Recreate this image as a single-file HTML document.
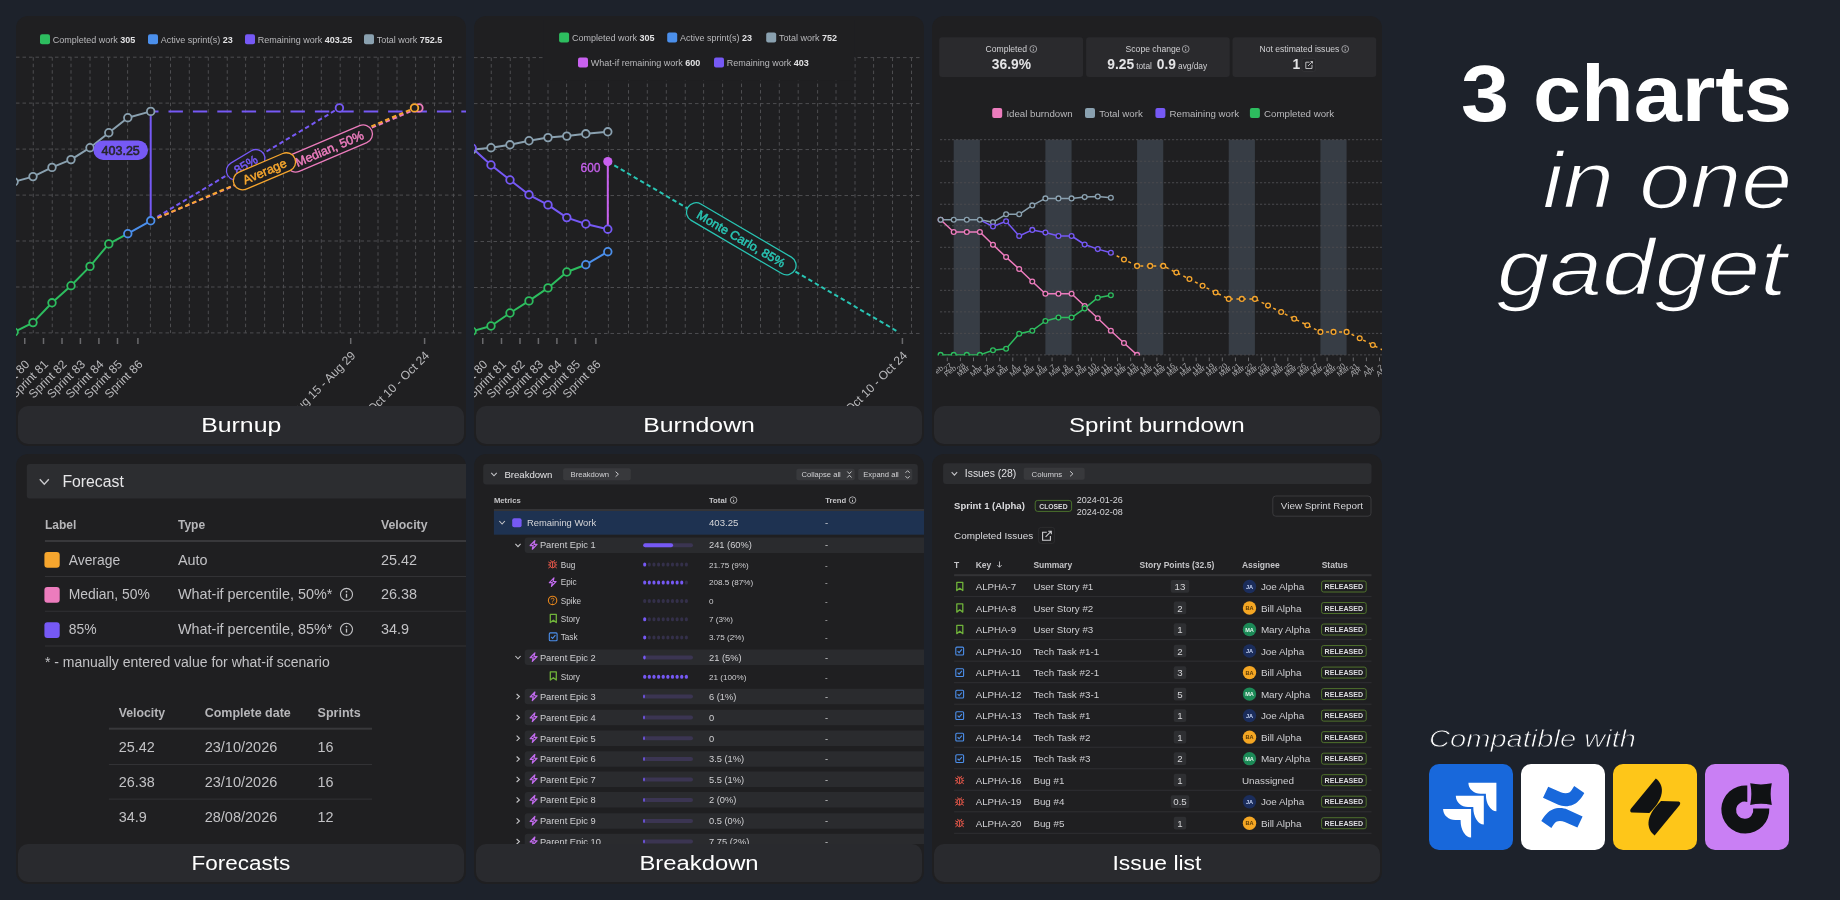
<!DOCTYPE html><html><head><meta charset="utf-8"><style>

*{margin:0;padding:0;box-sizing:border-box}
html,body{width:1840px;height:900px;overflow:hidden;background:#1d222b;font-family:"Liberation Sans", sans-serif}
.panel{position:absolute;width:450px;height:430px;border-radius:12px;background:#1f1f21;overflow:hidden}
.tbar{position:absolute;width:446px;height:38px;border-radius:10px;background:#292a2e;color:#fff;font-size:20px;text-align:center;line-height:38px}
.tbar span{display:inline-block;transform:scaleX(1.24)}
.hero{position:absolute;color:#fff;white-space:nowrap;transform-origin:100% 50%}
.h1{font-weight:bold;font-size:79px;top:48px;right:48px;transform:scaleX(1.0926)}
.h2{font-style:italic;font-size:79px;top:135px;right:47.5px;transform:scaleX(1.16);-webkit-text-stroke:1.6px #1d222b}
.h3{font-style:italic;font-size:79px;top:222px;right:53.5px;transform:scaleX(1.2);-webkit-text-stroke:1.6px #1d222b}
.compat{position:absolute;left:1429px;top:725px;color:#fff;font-style:italic;font-size:24px;white-space:nowrap;transform:scaleX(1.212);transform-origin:0 50%;-webkit-text-stroke:0.8px #1d222b}
.ico{position:absolute;top:764px;width:84px;height:86px;border-radius:10px;overflow:hidden}
.ico svg{display:block}
body>*{will-change:transform}

.chart{position:absolute;left:0;top:0;font-family:"Liberation Sans",sans-serif}
</style></head><body>
<div class="panel" style="left:16px;top:16px"></div>
<div class="panel" style="left:474px;top:16px"></div>
<div class="panel" style="left:932px;top:16px"></div>
<div class="panel" style="left:16px;top:454px"></div>
<div class="panel" style="left:474px;top:454px"></div>
<div class="panel" style="left:932px;top:454px"></div>
<svg class="chart" width="1840" height="900"><defs><clipPath id="cbu"><rect x="16" y="16" width="450" height="390"/></clipPath></defs><g clip-path="url(#cbu)"><line x1="16" y1="57.2" x2="464" y2="57.2" stroke="#4d4d50" stroke-width="1" stroke-dasharray="3.5 3"/><line x1="16" y1="103.1" x2="464" y2="103.1" stroke="#4d4d50" stroke-width="1" stroke-dasharray="3.5 3"/><line x1="16" y1="149.1" x2="464" y2="149.1" stroke="#4d4d50" stroke-width="1" stroke-dasharray="3.5 3"/><line x1="16" y1="195.1" x2="464" y2="195.1" stroke="#4d4d50" stroke-width="1" stroke-dasharray="3.5 3"/><line x1="16" y1="241" x2="464" y2="241" stroke="#4d4d50" stroke-width="1" stroke-dasharray="3.5 3"/><line x1="16" y1="287" x2="464" y2="287" stroke="#4d4d50" stroke-width="1" stroke-dasharray="3.5 3"/><line x1="16" y1="332.9" x2="464" y2="332.9" stroke="#4d4d50" stroke-width="1" stroke-dasharray="3.5 3"/><line x1="33.25" y1="57.2" x2="33.25" y2="332.9" stroke="#4d4d50" stroke-width="1" stroke-dasharray="3.5 3"/><line x1="52.25" y1="57.2" x2="52.25" y2="332.9" stroke="#4d4d50" stroke-width="1" stroke-dasharray="3.5 3"/><line x1="71" y1="57.2" x2="71" y2="332.9" stroke="#4d4d50" stroke-width="1" stroke-dasharray="3.5 3"/><line x1="90" y1="57.2" x2="90" y2="332.9" stroke="#4d4d50" stroke-width="1" stroke-dasharray="3.5 3"/><line x1="108.6" y1="57.2" x2="108.6" y2="332.9" stroke="#4d4d50" stroke-width="1" stroke-dasharray="3.5 3"/><line x1="127.6" y1="57.2" x2="127.6" y2="332.9" stroke="#4d4d50" stroke-width="1" stroke-dasharray="3.5 3"/><line x1="150.4" y1="57.2" x2="150.4" y2="332.9" stroke="#4d4d50" stroke-width="1" stroke-dasharray="3.5 3"/><line x1="170.5" y1="57.2" x2="170.5" y2="332.9" stroke="#4d4d50" stroke-width="1" stroke-dasharray="3.5 3"/><line x1="189.3" y1="57.2" x2="189.3" y2="332.9" stroke="#4d4d50" stroke-width="1" stroke-dasharray="3.5 3"/><line x1="208.3" y1="57.2" x2="208.3" y2="332.9" stroke="#4d4d50" stroke-width="1" stroke-dasharray="3.5 3"/><line x1="227.25" y1="57.2" x2="227.25" y2="332.9" stroke="#4d4d50" stroke-width="1" stroke-dasharray="3.5 3"/><line x1="245.6" y1="57.2" x2="245.6" y2="332.9" stroke="#4d4d50" stroke-width="1" stroke-dasharray="3.5 3"/><line x1="264.6" y1="57.2" x2="264.6" y2="332.9" stroke="#4d4d50" stroke-width="1" stroke-dasharray="3.5 3"/><line x1="283.5" y1="57.2" x2="283.5" y2="332.9" stroke="#4d4d50" stroke-width="1" stroke-dasharray="3.5 3"/><line x1="302.5" y1="57.2" x2="302.5" y2="332.9" stroke="#4d4d50" stroke-width="1" stroke-dasharray="3.5 3"/><line x1="321.3" y1="57.2" x2="321.3" y2="332.9" stroke="#4d4d50" stroke-width="1" stroke-dasharray="3.5 3"/><line x1="340.2" y1="57.2" x2="340.2" y2="332.9" stroke="#4d4d50" stroke-width="1" stroke-dasharray="3.5 3"/><line x1="359.6" y1="57.2" x2="359.6" y2="332.9" stroke="#4d4d50" stroke-width="1" stroke-dasharray="3.5 3"/><line x1="378" y1="57.2" x2="378" y2="332.9" stroke="#4d4d50" stroke-width="1" stroke-dasharray="3.5 3"/><line x1="397" y1="57.2" x2="397" y2="332.9" stroke="#4d4d50" stroke-width="1" stroke-dasharray="3.5 3"/><line x1="415.6" y1="57.2" x2="415.6" y2="332.9" stroke="#4d4d50" stroke-width="1" stroke-dasharray="3.5 3"/><line x1="434.5" y1="57.2" x2="434.5" y2="332.9" stroke="#4d4d50" stroke-width="1" stroke-dasharray="3.5 3"/><line x1="453.5" y1="57.2" x2="453.5" y2="332.9" stroke="#4d4d50" stroke-width="1" stroke-dasharray="3.5 3"/><line x1="24.75" y1="338" x2="24.75" y2="344" stroke="#6a6a6d" stroke-width="1.5"/><line x1="43.5" y1="338" x2="43.5" y2="344" stroke="#6a6a6d" stroke-width="1.5"/><line x1="62" y1="338" x2="62" y2="344" stroke="#6a6a6d" stroke-width="1.5"/><line x1="80.4" y1="338" x2="80.4" y2="344" stroke="#6a6a6d" stroke-width="1.5"/><line x1="98.9" y1="338" x2="98.9" y2="344" stroke="#6a6a6d" stroke-width="1.5"/><line x1="117.5" y1="338" x2="117.5" y2="344" stroke="#6a6a6d" stroke-width="1.5"/><line x1="137.9" y1="338" x2="137.9" y2="344" stroke="#6a6a6d" stroke-width="1.5"/><line x1="350.7" y1="338" x2="350.7" y2="344" stroke="#6a6a6d" stroke-width="1.5"/><line x1="424.6" y1="338" x2="424.6" y2="344" stroke="#6a6a6d" stroke-width="1.5"/><text transform="translate(30.25,365) rotate(-45)" text-anchor="end" font-size="12" fill="#b9b9bc">Sprint 80</text><text transform="translate(49,365) rotate(-45)" text-anchor="end" font-size="12" fill="#b9b9bc">Sprint 81</text><text transform="translate(67.5,365) rotate(-45)" text-anchor="end" font-size="12" fill="#b9b9bc">Sprint 82</text><text transform="translate(85.9,365) rotate(-45)" text-anchor="end" font-size="12" fill="#b9b9bc">Sprint 83</text><text transform="translate(104.4,365) rotate(-45)" text-anchor="end" font-size="12" fill="#b9b9bc">Sprint 84</text><text transform="translate(123,365) rotate(-45)" text-anchor="end" font-size="12" fill="#b9b9bc">Sprint 85</text><text transform="translate(143.4,365) rotate(-45)" text-anchor="end" font-size="12" fill="#b9b9bc">Sprint 86</text><text transform="translate(356.2,356.3) rotate(-45)" text-anchor="end" font-size="12" fill="#b9b9bc">Aug 15 - Aug 29</text><text transform="translate(430.1,356.3) rotate(-45)" text-anchor="end" font-size="12" fill="#b9b9bc">Oct 10 - Oct 24</text><rect x="40" y="34.3" width="10" height="10" rx="2" fill="#2dbd5f"/><text x="52.8" y="42.9" font-size="9" fill="#b9b9bc">Completed work <tspan font-weight="bold" fill="#e2e2e4">305</tspan></text><rect x="148" y="34.3" width="10" height="10" rx="2" fill="#4b8feb"/><text x="160.8" y="42.9" font-size="9" fill="#b9b9bc">Active sprint(s) <tspan font-weight="bold" fill="#e2e2e4">23</tspan></text><rect x="245" y="34.3" width="10" height="10" rx="2" fill="#7659f5"/><text x="257.8" y="42.9" font-size="9" fill="#b9b9bc">Remaining work <tspan font-weight="bold" fill="#e2e2e4">403.25</tspan></text><rect x="364" y="34.3" width="10" height="10" rx="2" fill="#8aa1b0"/><text x="376.8" y="42.9" font-size="9" fill="#b9b9bc">Total work <tspan font-weight="bold" fill="#e2e2e4">752.5</tspan></text><line x1="150.7" y1="111.4" x2="470" y2="111.4" stroke="#7659f5" stroke-width="2" stroke-dasharray="14.4 10" stroke-dashoffset="6.6"/><polyline points="14.1,181.8 33,176.6 52,167.4 71,159.6 90,147.7 108.8,132.7 127.8,117.7 150.7,111.4" fill="none" stroke="#8aa1b0" stroke-width="2" stroke-linejoin="round"/><polyline points="14.1,332 33,322.6 52,302.8 71,285.7 90,266.4 108.8,243.9 127.8,233.7" fill="none" stroke="#2dbd5f" stroke-width="2" stroke-linejoin="round"/><polyline points="127.8,233.7 150.7,220.8" fill="none" stroke="#4b8feb" stroke-width="2" stroke-linejoin="round"/><line x1="150.7" y1="111.4" x2="150.7" y2="220.8" stroke="#7659f5" stroke-width="2"/><line x1="150.7" y1="220.8" x2="339.4" y2="107.9" stroke="#7659f5" stroke-width="2" stroke-dasharray="4.5 3"/><line x1="150.7" y1="220.8" x2="418.9" y2="107.9" stroke="#ec7cbd" stroke-width="2" stroke-dasharray="4.5 3"/><line x1="150.7" y1="220.8" x2="414.5" y2="107.9" stroke="#f6a62e" stroke-width="2" stroke-dasharray="4.5 3"/><circle cx="14.1" cy="181.8" r="3.8" fill="#1f1f21" stroke="#8aa1b0" stroke-width="1.8"/><circle cx="33" cy="176.6" r="3.8" fill="#1f1f21" stroke="#8aa1b0" stroke-width="1.8"/><circle cx="52" cy="167.4" r="3.8" fill="#1f1f21" stroke="#8aa1b0" stroke-width="1.8"/><circle cx="71" cy="159.6" r="3.8" fill="#1f1f21" stroke="#8aa1b0" stroke-width="1.8"/><circle cx="90" cy="147.7" r="3.8" fill="#1f1f21" stroke="#8aa1b0" stroke-width="1.8"/><circle cx="108.8" cy="132.7" r="3.8" fill="#1f1f21" stroke="#8aa1b0" stroke-width="1.8"/><circle cx="127.8" cy="117.7" r="3.8" fill="#1f1f21" stroke="#8aa1b0" stroke-width="1.8"/><circle cx="150.7" cy="111.4" r="3.8" fill="#1f1f21" stroke="#8aa1b0" stroke-width="1.8"/><circle cx="14.1" cy="332" r="3.8" fill="#1f1f21" stroke="#2dbd5f" stroke-width="1.8"/><circle cx="33" cy="322.6" r="3.8" fill="#1f1f21" stroke="#2dbd5f" stroke-width="1.8"/><circle cx="52" cy="302.8" r="3.8" fill="#1f1f21" stroke="#2dbd5f" stroke-width="1.8"/><circle cx="71" cy="285.7" r="3.8" fill="#1f1f21" stroke="#2dbd5f" stroke-width="1.8"/><circle cx="90" cy="266.4" r="3.8" fill="#1f1f21" stroke="#2dbd5f" stroke-width="1.8"/><circle cx="108.8" cy="243.9" r="3.8" fill="#1f1f21" stroke="#2dbd5f" stroke-width="1.8"/><circle cx="127.8" cy="233.7" r="3.8" fill="#1f1f21" stroke="#4b8feb" stroke-width="1.8"/><circle cx="150.7" cy="220.8" r="3.8" fill="#1f1f21" stroke="#4b8feb" stroke-width="1.8"/><circle cx="339.4" cy="107.9" r="3.8" fill="#1f1f21" stroke="#7659f5" stroke-width="1.8"/><circle cx="418.9" cy="107.9" r="3.8" fill="#1f1f21" stroke="#ec7cbd" stroke-width="1.8"/><circle cx="414.5" cy="107.9" r="3.8" fill="#1f1f21" stroke="#f6a62e" stroke-width="1.8"/><rect x="93.4" y="140.5" width="54.6" height="19.4" rx="9.7" fill="#7659f5"/><text x="120.7" y="154.6" text-anchor="middle" font-size="12.5" fill="#26262a" stroke="#26262a" stroke-width="0.55">403.25</text><g transform="translate(245.7,164.7) rotate(-31)"><rect x="-21" y="-9" width="42" height="18" rx="9" fill="#1f1f21" stroke="#7659f5" stroke-width="1.3"/><text x="0" y="4.5" text-anchor="middle" font-size="12.5" fill="#7659f5" stroke="#7659f5" stroke-width="0.5">85%</text></g><g transform="translate(329.4,148.5) rotate(-23)"><rect x="-46" y="-9.25" width="92" height="18.5" rx="9.25" fill="#1f1f21" stroke="#ec7cbd" stroke-width="1.3"/><text x="0" y="4.5" text-anchor="middle" font-size="12.5" fill="#ec7cbd" stroke="#ec7cbd" stroke-width="0.5">Median, 50%</text></g><g transform="translate(264.5,171.3) rotate(-23)"><rect x="-33" y="-9.25" width="66" height="18.5" rx="9.25" fill="#1f1f21" stroke="#f6a62e" stroke-width="1.3"/><text x="0" y="4.5" text-anchor="middle" font-size="12.5" fill="#f6a62e" stroke="#f6a62e" stroke-width="0.5">Average</text></g></g></svg><svg class="chart" width="1840" height="900"><defs><clipPath id="cbd"><rect x="474" y="16" width="450" height="390"/></clipPath></defs><g clip-path="url(#cbd)"><line x1="474" y1="57.6" x2="922" y2="57.6" stroke="#4d4d50" stroke-width="1" stroke-dasharray="3.5 3"/><line x1="474" y1="103.58" x2="922" y2="103.58" stroke="#4d4d50" stroke-width="1" stroke-dasharray="3.5 3"/><line x1="474" y1="149.56" x2="922" y2="149.56" stroke="#4d4d50" stroke-width="1" stroke-dasharray="3.5 3"/><line x1="474" y1="195.54" x2="922" y2="195.54" stroke="#4d4d50" stroke-width="1" stroke-dasharray="3.5 3"/><line x1="474" y1="241.52" x2="922" y2="241.52" stroke="#4d4d50" stroke-width="1" stroke-dasharray="3.5 3"/><line x1="474" y1="287.5" x2="922" y2="287.5" stroke="#4d4d50" stroke-width="1" stroke-dasharray="3.5 3"/><line x1="474" y1="333.48" x2="922" y2="333.48" stroke="#4d4d50" stroke-width="1" stroke-dasharray="3.5 3"/><line x1="491.25" y1="57.6" x2="491.25" y2="333.48" stroke="#4d4d50" stroke-width="1" stroke-dasharray="3.5 3"/><line x1="510.25" y1="57.6" x2="510.25" y2="333.48" stroke="#4d4d50" stroke-width="1" stroke-dasharray="3.5 3"/><line x1="529" y1="57.6" x2="529" y2="333.48" stroke="#4d4d50" stroke-width="1" stroke-dasharray="3.5 3"/><line x1="548" y1="57.6" x2="548" y2="333.48" stroke="#4d4d50" stroke-width="1" stroke-dasharray="3.5 3"/><line x1="566.6" y1="57.6" x2="566.6" y2="333.48" stroke="#4d4d50" stroke-width="1" stroke-dasharray="3.5 3"/><line x1="585.6" y1="57.6" x2="585.6" y2="333.48" stroke="#4d4d50" stroke-width="1" stroke-dasharray="3.5 3"/><line x1="608.4" y1="57.6" x2="608.4" y2="333.48" stroke="#4d4d50" stroke-width="1" stroke-dasharray="3.5 3"/><line x1="628.5" y1="57.6" x2="628.5" y2="333.48" stroke="#4d4d50" stroke-width="1" stroke-dasharray="3.5 3"/><line x1="647.3" y1="57.6" x2="647.3" y2="333.48" stroke="#4d4d50" stroke-width="1" stroke-dasharray="3.5 3"/><line x1="666.3" y1="57.6" x2="666.3" y2="333.48" stroke="#4d4d50" stroke-width="1" stroke-dasharray="3.5 3"/><line x1="685.25" y1="57.6" x2="685.25" y2="333.48" stroke="#4d4d50" stroke-width="1" stroke-dasharray="3.5 3"/><line x1="703.6" y1="57.6" x2="703.6" y2="333.48" stroke="#4d4d50" stroke-width="1" stroke-dasharray="3.5 3"/><line x1="722.6" y1="57.6" x2="722.6" y2="333.48" stroke="#4d4d50" stroke-width="1" stroke-dasharray="3.5 3"/><line x1="741.5" y1="57.6" x2="741.5" y2="333.48" stroke="#4d4d50" stroke-width="1" stroke-dasharray="3.5 3"/><line x1="760.5" y1="57.6" x2="760.5" y2="333.48" stroke="#4d4d50" stroke-width="1" stroke-dasharray="3.5 3"/><line x1="779.3" y1="57.6" x2="779.3" y2="333.48" stroke="#4d4d50" stroke-width="1" stroke-dasharray="3.5 3"/><line x1="798.2" y1="57.6" x2="798.2" y2="333.48" stroke="#4d4d50" stroke-width="1" stroke-dasharray="3.5 3"/><line x1="817.6" y1="57.6" x2="817.6" y2="333.48" stroke="#4d4d50" stroke-width="1" stroke-dasharray="3.5 3"/><line x1="836" y1="57.6" x2="836" y2="333.48" stroke="#4d4d50" stroke-width="1" stroke-dasharray="3.5 3"/><line x1="855" y1="57.6" x2="855" y2="333.48" stroke="#4d4d50" stroke-width="1" stroke-dasharray="3.5 3"/><line x1="873.6" y1="57.6" x2="873.6" y2="333.48" stroke="#4d4d50" stroke-width="1" stroke-dasharray="3.5 3"/><line x1="892.5" y1="57.6" x2="892.5" y2="333.48" stroke="#4d4d50" stroke-width="1" stroke-dasharray="3.5 3"/><line x1="911.5" y1="57.6" x2="911.5" y2="333.48" stroke="#4d4d50" stroke-width="1" stroke-dasharray="3.5 3"/><rect x="543.7" y="20" width="310.6" height="60.5" fill="#1f1f21"/><line x1="482.75" y1="338" x2="482.75" y2="344" stroke="#6a6a6d" stroke-width="1.5"/><line x1="501.5" y1="338" x2="501.5" y2="344" stroke="#6a6a6d" stroke-width="1.5"/><line x1="520" y1="338" x2="520" y2="344" stroke="#6a6a6d" stroke-width="1.5"/><line x1="538.4" y1="338" x2="538.4" y2="344" stroke="#6a6a6d" stroke-width="1.5"/><line x1="556.9" y1="338" x2="556.9" y2="344" stroke="#6a6a6d" stroke-width="1.5"/><line x1="575.5" y1="338" x2="575.5" y2="344" stroke="#6a6a6d" stroke-width="1.5"/><line x1="595.9" y1="338" x2="595.9" y2="344" stroke="#6a6a6d" stroke-width="1.5"/><line x1="902.4" y1="338" x2="902.4" y2="344" stroke="#6a6a6d" stroke-width="1.5"/><text transform="translate(488.25,365) rotate(-45)" text-anchor="end" font-size="12" fill="#b9b9bc">Sprint 80</text><text transform="translate(507,365) rotate(-45)" text-anchor="end" font-size="12" fill="#b9b9bc">Sprint 81</text><text transform="translate(525.5,365) rotate(-45)" text-anchor="end" font-size="12" fill="#b9b9bc">Sprint 82</text><text transform="translate(543.9,365) rotate(-45)" text-anchor="end" font-size="12" fill="#b9b9bc">Sprint 83</text><text transform="translate(562.4,365) rotate(-45)" text-anchor="end" font-size="12" fill="#b9b9bc">Sprint 84</text><text transform="translate(581,365) rotate(-45)" text-anchor="end" font-size="12" fill="#b9b9bc">Sprint 85</text><text transform="translate(601.4,365) rotate(-45)" text-anchor="end" font-size="12" fill="#b9b9bc">Sprint 86</text><text transform="translate(907.9,356.3) rotate(-45)" text-anchor="end" font-size="12" fill="#b9b9bc">Oct 10 - Oct 24</text><rect x="559.1" y="32.5" width="10" height="10" rx="2" fill="#2dbd5f"/><text x="571.9" y="41.1" font-size="9" fill="#b9b9bc">Completed work <tspan font-weight="bold" fill="#e2e2e4">305</tspan></text><rect x="667.2" y="32.5" width="10" height="10" rx="2" fill="#4b8feb"/><text x="680" y="41.1" font-size="9" fill="#b9b9bc">Active sprint(s) <tspan font-weight="bold" fill="#e2e2e4">23</tspan></text><rect x="766.2" y="32.5" width="10" height="10" rx="2" fill="#8aa1b0"/><text x="779" y="41.1" font-size="9" fill="#b9b9bc">Total work <tspan font-weight="bold" fill="#e2e2e4">752</tspan></text><rect x="578" y="57.5" width="10" height="10" rx="2" fill="#c861ef"/><text x="590.8" y="66.1" font-size="9" fill="#b9b9bc">What-if remaining work <tspan font-weight="bold" fill="#e2e2e4">600</tspan></text><rect x="714" y="57.5" width="10" height="10" rx="2" fill="#7659f5"/><text x="726.8" y="66.1" font-size="9" fill="#b9b9bc">Remaining work <tspan font-weight="bold" fill="#e2e2e4">403</tspan></text><line x1="607.8" y1="161.6" x2="898.6" y2="332.1" stroke="#29c4b3" stroke-width="2" stroke-dasharray="4.5 3"/><polyline points="472.1,149.6 491,147.7 510,144.8 529,140.75 548,137.6 566.8,136.1 585.8,133.8 607.8,131.8" fill="none" stroke="#8aa1b0" stroke-width="2" stroke-linejoin="round"/><polyline points="472.1,148 491,165 510,180 529,194.8 548,204.9 566.8,217.6 585.8,224 607.8,229.2" fill="none" stroke="#7659f5" stroke-width="2" stroke-linejoin="round"/><polyline points="472.1,331.2 491,326 510,313 529,300.9 548,287.9 566.8,272 585.8,264.7" fill="none" stroke="#2dbd5f" stroke-width="2" stroke-linejoin="round"/><polyline points="585.8,264.7 607.8,251.7" fill="none" stroke="#4b8feb" stroke-width="2" stroke-linejoin="round"/><line x1="607.8" y1="161.6" x2="607.8" y2="229.2" stroke="#c861ef" stroke-width="2"/><circle cx="472.1" cy="149.6" r="3.8" fill="#1f1f21" stroke="#8aa1b0" stroke-width="1.8"/><circle cx="491" cy="147.7" r="3.8" fill="#1f1f21" stroke="#8aa1b0" stroke-width="1.8"/><circle cx="510" cy="144.8" r="3.8" fill="#1f1f21" stroke="#8aa1b0" stroke-width="1.8"/><circle cx="529" cy="140.75" r="3.8" fill="#1f1f21" stroke="#8aa1b0" stroke-width="1.8"/><circle cx="548" cy="137.6" r="3.8" fill="#1f1f21" stroke="#8aa1b0" stroke-width="1.8"/><circle cx="566.8" cy="136.1" r="3.8" fill="#1f1f21" stroke="#8aa1b0" stroke-width="1.8"/><circle cx="585.8" cy="133.8" r="3.8" fill="#1f1f21" stroke="#8aa1b0" stroke-width="1.8"/><circle cx="607.8" cy="131.8" r="3.8" fill="#1f1f21" stroke="#8aa1b0" stroke-width="1.8"/><circle cx="472.1" cy="148" r="3.8" fill="#1f1f21" stroke="#7659f5" stroke-width="1.8"/><circle cx="491" cy="165" r="3.8" fill="#1f1f21" stroke="#7659f5" stroke-width="1.8"/><circle cx="510" cy="180" r="3.8" fill="#1f1f21" stroke="#7659f5" stroke-width="1.8"/><circle cx="529" cy="194.8" r="3.8" fill="#1f1f21" stroke="#7659f5" stroke-width="1.8"/><circle cx="548" cy="204.9" r="3.8" fill="#1f1f21" stroke="#7659f5" stroke-width="1.8"/><circle cx="566.8" cy="217.6" r="3.8" fill="#1f1f21" stroke="#7659f5" stroke-width="1.8"/><circle cx="585.8" cy="224" r="3.8" fill="#1f1f21" stroke="#7659f5" stroke-width="1.8"/><circle cx="607.8" cy="229.2" r="3.8" fill="#1f1f21" stroke="#7659f5" stroke-width="1.8"/><circle cx="472.1" cy="331.2" r="3.8" fill="#1f1f21" stroke="#2dbd5f" stroke-width="1.8"/><circle cx="491" cy="326" r="3.8" fill="#1f1f21" stroke="#2dbd5f" stroke-width="1.8"/><circle cx="510" cy="313" r="3.8" fill="#1f1f21" stroke="#2dbd5f" stroke-width="1.8"/><circle cx="529" cy="300.9" r="3.8" fill="#1f1f21" stroke="#2dbd5f" stroke-width="1.8"/><circle cx="548" cy="287.9" r="3.8" fill="#1f1f21" stroke="#2dbd5f" stroke-width="1.8"/><circle cx="566.8" cy="272" r="3.8" fill="#1f1f21" stroke="#2dbd5f" stroke-width="1.8"/><circle cx="585.8" cy="264.7" r="3.8" fill="#1f1f21" stroke="#4b8feb" stroke-width="1.8"/><circle cx="607.8" cy="251.7" r="3.8" fill="#1f1f21" stroke="#4b8feb" stroke-width="1.8"/><circle cx="607.8" cy="161.6" r="4.6" fill="#c861ef"/><text x="600.5" y="172.2" text-anchor="end" font-size="12" fill="#c861ef" stroke="#c861ef" stroke-width="0.3">600</text><g transform="translate(741.3,238.8) rotate(30.4)"><rect x="-62" y="-9.5" width="124" height="19" rx="9.5" fill="#1f1f21" stroke="#29c4b3" stroke-width="1.3"/><text x="0" y="4.5" text-anchor="middle" font-size="12.5" fill="#29c4b3" stroke="#29c4b3" stroke-width="0.5">Monte Carlo, 85%</text></g></g></svg><svg class="chart" width="1840" height="900"><defs><clipPath id="csb"><rect x="932" y="16" width="450" height="390"/></clipPath><clipPath id="csbp"><rect x="932" y="120" width="450" height="235.5"/></clipPath><clipPath id="csbl"><rect x="936" y="350" width="446" height="56"/></clipPath></defs><g clip-path="url(#csb)"><rect x="939.2" y="37.2" width="143.9" height="39.8" rx="3" fill="#2a2a2d"/><rect x="1086.1" y="37.2" width="143.6" height="39.8" rx="3" fill="#2a2a2d"/><rect x="1232.5" y="37.2" width="143.7" height="39.8" rx="3" fill="#2a2a2d"/><text x="985.5" y="52" font-size="8.6" fill="#d2d2d5">Completed</text><circle cx="1033.3" cy="49" r="3.4" fill="none" stroke="#b8b8bb" stroke-width="0.8"/><line x1="1033.3" y1="48.7" x2="1033.3" y2="51" stroke="#b8b8bb" stroke-width="0.9"/><circle cx="1033.3" cy="47.5" r="0.5" fill="#b8b8bb"/><text x="1125.6" y="52" font-size="8.6" fill="#d2d2d5">Scope change</text><circle cx="1185.7" cy="49" r="3.4" fill="none" stroke="#b8b8bb" stroke-width="0.8"/><line x1="1185.7" y1="48.7" x2="1185.7" y2="51" stroke="#b8b8bb" stroke-width="0.9"/><circle cx="1185.7" cy="47.5" r="0.5" fill="#b8b8bb"/><text x="1259.5" y="52" font-size="8.6" fill="#d2d2d5">Not estimated issues</text><circle cx="1345.2" cy="49" r="3.4" fill="none" stroke="#b8b8bb" stroke-width="0.8"/><line x1="1345.2" y1="48.7" x2="1345.2" y2="51" stroke="#b8b8bb" stroke-width="0.9"/><circle cx="1345.2" cy="47.5" r="0.5" fill="#b8b8bb"/><text x="991.8" y="68.7" font-size="13.8" font-weight="bold" fill="#e4e4e6">36.9%</text><text x="1107.3" y="68.7" font-size="13.8" font-weight="bold" fill="#e4e4e6">9.25<tspan font-size="8.3" font-weight="normal" fill="#cfcfd2" dx="2">total</tspan><tspan dx="5">0.9</tspan><tspan font-size="8.3" font-weight="normal" fill="#cfcfd2" dx="2">avg/day</tspan></text><text x="1292.5" y="68.7" font-size="13.8" font-weight="bold" fill="#e4e4e6">1</text><rect x="1302" y="58.3" width="13.4" height="13.2" rx="2" fill="#262629" stroke="#38383b" stroke-width="0.6"/><path d="M1310.5,61.5 H1312.5 V63.5 M1312.5,61.5 L1308,66 M1309.5,62.2 H1305.8 V68.5 H1312 V64.8" fill="none" stroke="#c8c8cb" stroke-width="0.9"/><rect x="992.2" y="108.1" width="10" height="10" rx="2" fill="#ec7cbd"/><text x="1006.4" y="116.7" font-size="9.7" fill="#b9b9bc">Ideal burndown</text><rect x="1085" y="108.1" width="10" height="10" rx="2" fill="#8aa1b0"/><text x="1099.2" y="116.7" font-size="9.7" fill="#b9b9bc">Total work</text><rect x="1155.4" y="108.1" width="10" height="10" rx="2" fill="#7659f5"/><text x="1169.6" y="116.7" font-size="9.7" fill="#b9b9bc">Remaining work</text><rect x="1249.9" y="108.1" width="10" height="10" rx="2" fill="#2dbd5f"/><text x="1264.1" y="116.7" font-size="9.7" fill="#b9b9bc">Completed work</text><rect x="953.7" y="139.7" width="26.19" height="215.2" fill="#373d45"/><rect x="1045.38" y="139.7" width="26.19" height="215.2" fill="#373d45"/><rect x="1137.06" y="139.7" width="26.19" height="215.2" fill="#373d45"/><rect x="1228.73" y="139.7" width="26.19" height="215.2" fill="#373d45"/><rect x="1320.41" y="139.7" width="26.19" height="215.2" fill="#373d45"/><line x1="940" y1="139.7" x2="1382" y2="139.7" stroke="#4a4a4e" stroke-width="1" stroke-dasharray="2.2 1.8"/><line x1="940" y1="161.22" x2="1382" y2="161.22" stroke="#4a4a4e" stroke-width="1" stroke-dasharray="2.2 1.8"/><line x1="940" y1="182.74" x2="1382" y2="182.74" stroke="#4a4a4e" stroke-width="1" stroke-dasharray="2.2 1.8"/><line x1="940" y1="204.26" x2="1382" y2="204.26" stroke="#4a4a4e" stroke-width="1" stroke-dasharray="2.2 1.8"/><line x1="940" y1="225.78" x2="1382" y2="225.78" stroke="#4a4a4e" stroke-width="1" stroke-dasharray="2.2 1.8"/><line x1="940" y1="247.3" x2="1382" y2="247.3" stroke="#4a4a4e" stroke-width="1" stroke-dasharray="2.2 1.8"/><line x1="940" y1="268.82" x2="1382" y2="268.82" stroke="#4a4a4e" stroke-width="1" stroke-dasharray="2.2 1.8"/><line x1="940" y1="290.34" x2="1382" y2="290.34" stroke="#4a4a4e" stroke-width="1" stroke-dasharray="2.2 1.8"/><line x1="940" y1="311.86" x2="1382" y2="311.86" stroke="#4a4a4e" stroke-width="1" stroke-dasharray="2.2 1.8"/><line x1="940" y1="333.38" x2="1382" y2="333.38" stroke="#4a4a4e" stroke-width="1" stroke-dasharray="2.2 1.8"/><line x1="940" y1="354.9" x2="1382" y2="354.9" stroke="#4a4a4e" stroke-width="1" stroke-dasharray="2.2 1.8"/><g clip-path="url(#csbl)"><line x1="947.3" y1="357.5" x2="947.3" y2="361.2" stroke="#6a6a6d" stroke-width="1"/><text transform="translate(933.3,377) rotate(-37)" font-size="7.6" fill="#a8a8ab">Feb</text><text transform="translate(947.8,367.3) rotate(-40)" x="0" y="2.8" text-anchor="middle" font-size="7.8" fill="#a8a8ab">27</text><line x1="960.4" y1="357.5" x2="960.4" y2="361.2" stroke="#6a6a6d" stroke-width="1"/><text transform="translate(946.4,377) rotate(-37)" font-size="7.6" fill="#a8a8ab">Feb</text><text transform="translate(960.9,367.3) rotate(-40)" x="0" y="2.8" text-anchor="middle" font-size="7.8" fill="#a8a8ab">28</text><line x1="973.49" y1="357.5" x2="973.49" y2="361.2" stroke="#6a6a6d" stroke-width="1"/><text transform="translate(959.49,377) rotate(-37)" font-size="7.6" fill="#a8a8ab">Mar</text><text transform="translate(973.99,367.3) rotate(-40)" x="0" y="2.8" text-anchor="middle" font-size="7.8" fill="#a8a8ab">1</text><line x1="986.59" y1="357.5" x2="986.59" y2="361.2" stroke="#6a6a6d" stroke-width="1"/><text transform="translate(972.59,377) rotate(-37)" font-size="7.6" fill="#a8a8ab">Mar</text><text transform="translate(987.09,367.3) rotate(-40)" x="0" y="2.8" text-anchor="middle" font-size="7.8" fill="#a8a8ab">2</text><line x1="999.69" y1="357.5" x2="999.69" y2="361.2" stroke="#6a6a6d" stroke-width="1"/><text transform="translate(985.69,377) rotate(-37)" font-size="7.6" fill="#a8a8ab">Mar</text><text transform="translate(1000.19,367.3) rotate(-40)" x="0" y="2.8" text-anchor="middle" font-size="7.8" fill="#a8a8ab">3</text><line x1="1012.78" y1="357.5" x2="1012.78" y2="361.2" stroke="#6a6a6d" stroke-width="1"/><text transform="translate(998.78,377) rotate(-37)" font-size="7.6" fill="#a8a8ab">Mar</text><text transform="translate(1013.28,367.3) rotate(-40)" x="0" y="2.8" text-anchor="middle" font-size="7.8" fill="#a8a8ab">4</text><line x1="1025.88" y1="357.5" x2="1025.88" y2="361.2" stroke="#6a6a6d" stroke-width="1"/><text transform="translate(1011.88,377) rotate(-37)" font-size="7.6" fill="#a8a8ab">Mar</text><text transform="translate(1026.38,367.3) rotate(-40)" x="0" y="2.8" text-anchor="middle" font-size="7.8" fill="#a8a8ab">5</text><line x1="1038.98" y1="357.5" x2="1038.98" y2="361.2" stroke="#6a6a6d" stroke-width="1"/><text transform="translate(1024.98,377) rotate(-37)" font-size="7.6" fill="#a8a8ab">Mar</text><text transform="translate(1039.48,367.3) rotate(-40)" x="0" y="2.8" text-anchor="middle" font-size="7.8" fill="#a8a8ab">6</text><line x1="1052.08" y1="357.5" x2="1052.08" y2="361.2" stroke="#6a6a6d" stroke-width="1"/><text transform="translate(1038.08,377) rotate(-37)" font-size="7.6" fill="#a8a8ab">Mar</text><text transform="translate(1052.58,367.3) rotate(-40)" x="0" y="2.8" text-anchor="middle" font-size="7.8" fill="#a8a8ab">7</text><line x1="1065.17" y1="357.5" x2="1065.17" y2="361.2" stroke="#6a6a6d" stroke-width="1"/><text transform="translate(1051.17,377) rotate(-37)" font-size="7.6" fill="#a8a8ab">Mar</text><text transform="translate(1065.67,367.3) rotate(-40)" x="0" y="2.8" text-anchor="middle" font-size="7.8" fill="#a8a8ab">8</text><line x1="1078.27" y1="357.5" x2="1078.27" y2="361.2" stroke="#6a6a6d" stroke-width="1"/><text transform="translate(1064.27,377) rotate(-37)" font-size="7.6" fill="#a8a8ab">Mar</text><text transform="translate(1078.77,367.3) rotate(-40)" x="0" y="2.8" text-anchor="middle" font-size="7.8" fill="#a8a8ab">9</text><line x1="1091.37" y1="357.5" x2="1091.37" y2="361.2" stroke="#6a6a6d" stroke-width="1"/><text transform="translate(1077.37,377) rotate(-37)" font-size="7.6" fill="#a8a8ab">Mar</text><text transform="translate(1091.87,367.3) rotate(-40)" x="0" y="2.8" text-anchor="middle" font-size="7.8" fill="#a8a8ab">10</text><line x1="1104.46" y1="357.5" x2="1104.46" y2="361.2" stroke="#6a6a6d" stroke-width="1"/><text transform="translate(1090.46,377) rotate(-37)" font-size="7.6" fill="#a8a8ab">Mar</text><text transform="translate(1104.96,367.3) rotate(-40)" x="0" y="2.8" text-anchor="middle" font-size="7.8" fill="#a8a8ab">11</text><line x1="1117.56" y1="357.5" x2="1117.56" y2="361.2" stroke="#6a6a6d" stroke-width="1"/><text transform="translate(1103.56,377) rotate(-37)" font-size="7.6" fill="#a8a8ab">Mar</text><text transform="translate(1118.06,367.3) rotate(-40)" x="0" y="2.8" text-anchor="middle" font-size="7.8" fill="#a8a8ab">12</text><line x1="1130.66" y1="357.5" x2="1130.66" y2="361.2" stroke="#6a6a6d" stroke-width="1"/><text transform="translate(1116.66,377) rotate(-37)" font-size="7.6" fill="#a8a8ab">Mar</text><text transform="translate(1131.16,367.3) rotate(-40)" x="0" y="2.8" text-anchor="middle" font-size="7.8" fill="#a8a8ab">13</text><line x1="1143.75" y1="357.5" x2="1143.75" y2="361.2" stroke="#6a6a6d" stroke-width="1"/><text transform="translate(1129.75,377) rotate(-37)" font-size="7.6" fill="#a8a8ab">Mar</text><text transform="translate(1144.25,367.3) rotate(-40)" x="0" y="2.8" text-anchor="middle" font-size="7.8" fill="#a8a8ab">14</text><line x1="1156.85" y1="357.5" x2="1156.85" y2="361.2" stroke="#6a6a6d" stroke-width="1"/><text transform="translate(1142.85,377) rotate(-37)" font-size="7.6" fill="#a8a8ab">Mar</text><text transform="translate(1157.35,367.3) rotate(-40)" x="0" y="2.8" text-anchor="middle" font-size="7.8" fill="#a8a8ab">15</text><line x1="1169.95" y1="357.5" x2="1169.95" y2="361.2" stroke="#6a6a6d" stroke-width="1"/><text transform="translate(1155.95,377) rotate(-37)" font-size="7.6" fill="#a8a8ab">Mar</text><text transform="translate(1170.45,367.3) rotate(-40)" x="0" y="2.8" text-anchor="middle" font-size="7.8" fill="#a8a8ab">16</text><line x1="1183.05" y1="357.5" x2="1183.05" y2="361.2" stroke="#6a6a6d" stroke-width="1"/><text transform="translate(1169.05,377) rotate(-37)" font-size="7.6" fill="#a8a8ab">Mar</text><text transform="translate(1183.55,367.3) rotate(-40)" x="0" y="2.8" text-anchor="middle" font-size="7.8" fill="#a8a8ab">17</text><line x1="1196.14" y1="357.5" x2="1196.14" y2="361.2" stroke="#6a6a6d" stroke-width="1"/><text transform="translate(1182.14,377) rotate(-37)" font-size="7.6" fill="#a8a8ab">Mar</text><text transform="translate(1196.64,367.3) rotate(-40)" x="0" y="2.8" text-anchor="middle" font-size="7.8" fill="#a8a8ab">18</text><line x1="1209.24" y1="357.5" x2="1209.24" y2="361.2" stroke="#6a6a6d" stroke-width="1"/><text transform="translate(1195.24,377) rotate(-37)" font-size="7.6" fill="#a8a8ab">Mar</text><text transform="translate(1209.74,367.3) rotate(-40)" x="0" y="2.8" text-anchor="middle" font-size="7.8" fill="#a8a8ab">19</text><line x1="1222.34" y1="357.5" x2="1222.34" y2="361.2" stroke="#6a6a6d" stroke-width="1"/><text transform="translate(1208.34,377) rotate(-37)" font-size="7.6" fill="#a8a8ab">Mar</text><text transform="translate(1222.84,367.3) rotate(-40)" x="0" y="2.8" text-anchor="middle" font-size="7.8" fill="#a8a8ab">20</text><line x1="1235.43" y1="357.5" x2="1235.43" y2="361.2" stroke="#6a6a6d" stroke-width="1"/><text transform="translate(1221.43,377) rotate(-37)" font-size="7.6" fill="#a8a8ab">Mar</text><text transform="translate(1235.93,367.3) rotate(-40)" x="0" y="2.8" text-anchor="middle" font-size="7.8" fill="#a8a8ab">21</text><line x1="1248.53" y1="357.5" x2="1248.53" y2="361.2" stroke="#6a6a6d" stroke-width="1"/><text transform="translate(1234.53,377) rotate(-37)" font-size="7.6" fill="#a8a8ab">Mar</text><text transform="translate(1249.03,367.3) rotate(-40)" x="0" y="2.8" text-anchor="middle" font-size="7.8" fill="#a8a8ab">22</text><line x1="1261.63" y1="357.5" x2="1261.63" y2="361.2" stroke="#6a6a6d" stroke-width="1"/><text transform="translate(1247.63,377) rotate(-37)" font-size="7.6" fill="#a8a8ab">Mar</text><text transform="translate(1262.13,367.3) rotate(-40)" x="0" y="2.8" text-anchor="middle" font-size="7.8" fill="#a8a8ab">23</text><line x1="1274.72" y1="357.5" x2="1274.72" y2="361.2" stroke="#6a6a6d" stroke-width="1"/><text transform="translate(1260.72,377) rotate(-37)" font-size="7.6" fill="#a8a8ab">Mar</text><text transform="translate(1275.22,367.3) rotate(-40)" x="0" y="2.8" text-anchor="middle" font-size="7.8" fill="#a8a8ab">24</text><line x1="1287.82" y1="357.5" x2="1287.82" y2="361.2" stroke="#6a6a6d" stroke-width="1"/><text transform="translate(1273.82,377) rotate(-37)" font-size="7.6" fill="#a8a8ab">Mar</text><text transform="translate(1288.32,367.3) rotate(-40)" x="0" y="2.8" text-anchor="middle" font-size="7.8" fill="#a8a8ab">25</text><line x1="1300.92" y1="357.5" x2="1300.92" y2="361.2" stroke="#6a6a6d" stroke-width="1"/><text transform="translate(1286.92,377) rotate(-37)" font-size="7.6" fill="#a8a8ab">Mar</text><text transform="translate(1301.42,367.3) rotate(-40)" x="0" y="2.8" text-anchor="middle" font-size="7.8" fill="#a8a8ab">26</text><line x1="1314.02" y1="357.5" x2="1314.02" y2="361.2" stroke="#6a6a6d" stroke-width="1"/><text transform="translate(1300.02,377) rotate(-37)" font-size="7.6" fill="#a8a8ab">Mar</text><text transform="translate(1314.52,367.3) rotate(-40)" x="0" y="2.8" text-anchor="middle" font-size="7.8" fill="#a8a8ab">27</text><line x1="1327.11" y1="357.5" x2="1327.11" y2="361.2" stroke="#6a6a6d" stroke-width="1"/><text transform="translate(1313.11,377) rotate(-37)" font-size="7.6" fill="#a8a8ab">Mar</text><text transform="translate(1327.61,367.3) rotate(-40)" x="0" y="2.8" text-anchor="middle" font-size="7.8" fill="#a8a8ab">28</text><line x1="1340.21" y1="357.5" x2="1340.21" y2="361.2" stroke="#6a6a6d" stroke-width="1"/><text transform="translate(1326.21,377) rotate(-37)" font-size="7.6" fill="#a8a8ab">Mar</text><text transform="translate(1340.71,367.3) rotate(-40)" x="0" y="2.8" text-anchor="middle" font-size="7.8" fill="#a8a8ab">30</text><line x1="1353.31" y1="357.5" x2="1353.31" y2="361.2" stroke="#6a6a6d" stroke-width="1"/><text transform="translate(1339.31,377) rotate(-37)" font-size="7.6" fill="#a8a8ab">Mar</text><text transform="translate(1353.81,367.3) rotate(-40)" x="0" y="2.8" text-anchor="middle" font-size="7.8" fill="#a8a8ab">31</text><line x1="1366.4" y1="357.5" x2="1366.4" y2="361.2" stroke="#6a6a6d" stroke-width="1"/><text transform="translate(1352.4,377) rotate(-37)" font-size="7.6" fill="#a8a8ab">Apr</text><text transform="translate(1366.9,367.3) rotate(-40)" x="0" y="2.8" text-anchor="middle" font-size="7.8" fill="#a8a8ab">1</text><line x1="1379.5" y1="357.5" x2="1379.5" y2="361.2" stroke="#6a6a6d" stroke-width="1"/><text transform="translate(1365.5,377) rotate(-37)" font-size="7.6" fill="#a8a8ab">Apr</text><text transform="translate(1380,367.3) rotate(-40)" x="0" y="2.8" text-anchor="middle" font-size="7.8" fill="#a8a8ab">2</text><line x1="1392.6" y1="357.5" x2="1392.6" y2="361.2" stroke="#6a6a6d" stroke-width="1"/><text transform="translate(1378.6,377) rotate(-37)" font-size="7.6" fill="#a8a8ab">Apr</text><text transform="translate(1393.1,367.3) rotate(-40)" x="0" y="2.8" text-anchor="middle" font-size="7.8" fill="#a8a8ab">3</text></g><g clip-path="url(#csbp)"><polyline points="1110.86,252.8 1123.96,259.5 1137.06,265.9 1150.15,265.9 1163.25,265.9 1176.35,272.6 1189.44,279 1202.54,285.8 1215.64,292.5 1228.73,298.9 1241.83,298.9 1254.93,298.9 1268.03,305.6 1281.12,312 1294.22,318.8 1307.32,325.2 1320.41,331.9 1333.51,331.9 1346.61,331.9 1359.7,338.3 1372.8,345 1385.9,351.5" fill="none" stroke="#f6a62e" stroke-width="1.5" stroke-dasharray="3 3.5" stroke-linejoin="round"/><polyline points="940.6,219.8 953.7,232 966.79,232 979.89,232 992.99,244.8 1006.09,257.1 1019.18,269 1032.28,281.5 1045.38,293.8 1058.47,293.8 1071.57,293.8 1084.67,306 1097.76,318.2 1110.86,330.7 1123.96,343 1137.06,354.9 1150.15,367" fill="none" stroke="#ec7cbd" stroke-width="1.5" stroke-linejoin="round"/><polyline points="940.6,354.9 953.7,354.9 966.79,354.9 979.89,354.9 992.99,350.3 1006.09,348.8 1019.18,333.8 1032.28,330.7 1045.38,321 1058.47,317.6 1071.57,317.6 1084.67,308.4 1097.76,297.7 1110.86,295.3" fill="none" stroke="#2dbd5f" stroke-width="1.5" stroke-linejoin="round"/><polyline points="940.6,219.8 953.7,219.8 966.79,219.8 979.89,219.8 992.99,222.2 1006.09,214.3 1019.18,214.3 1032.28,205.4 1045.38,198.4 1058.47,198.4 1071.57,198.4 1084.67,197.1 1097.76,196.5 1110.86,197.8" fill="none" stroke="#8aa1b0" stroke-width="1.5" stroke-linejoin="round"/><polyline points="979.89,219.8 992.99,226.5 1006.09,221.3 1019.18,236 1032.28,229.9 1045.38,232.6 1058.47,236 1071.57,236 1084.67,244.5 1097.76,249.1 1110.86,252.8" fill="none" stroke="#7659f5" stroke-width="1.5" stroke-linejoin="round"/><circle cx="1123.96" cy="259.5" r="2.4" fill="#1f1f21" stroke="#f6a62e" stroke-width="1.3"/><circle cx="1137.06" cy="265.9" r="2.4" fill="#1f1f21" stroke="#f6a62e" stroke-width="1.3"/><circle cx="1150.15" cy="265.9" r="2.4" fill="#1f1f21" stroke="#f6a62e" stroke-width="1.3"/><circle cx="1163.25" cy="265.9" r="2.4" fill="#1f1f21" stroke="#f6a62e" stroke-width="1.3"/><circle cx="1176.35" cy="272.6" r="2.4" fill="#1f1f21" stroke="#f6a62e" stroke-width="1.3"/><circle cx="1189.44" cy="279" r="2.4" fill="#1f1f21" stroke="#f6a62e" stroke-width="1.3"/><circle cx="1202.54" cy="285.8" r="2.4" fill="#1f1f21" stroke="#f6a62e" stroke-width="1.3"/><circle cx="1215.64" cy="292.5" r="2.4" fill="#1f1f21" stroke="#f6a62e" stroke-width="1.3"/><circle cx="1228.73" cy="298.9" r="2.4" fill="#1f1f21" stroke="#f6a62e" stroke-width="1.3"/><circle cx="1241.83" cy="298.9" r="2.4" fill="#1f1f21" stroke="#f6a62e" stroke-width="1.3"/><circle cx="1254.93" cy="298.9" r="2.4" fill="#1f1f21" stroke="#f6a62e" stroke-width="1.3"/><circle cx="1268.03" cy="305.6" r="2.4" fill="#1f1f21" stroke="#f6a62e" stroke-width="1.3"/><circle cx="1281.12" cy="312" r="2.4" fill="#1f1f21" stroke="#f6a62e" stroke-width="1.3"/><circle cx="1294.22" cy="318.8" r="2.4" fill="#1f1f21" stroke="#f6a62e" stroke-width="1.3"/><circle cx="1307.32" cy="325.2" r="2.4" fill="#1f1f21" stroke="#f6a62e" stroke-width="1.3"/><circle cx="1320.41" cy="331.9" r="2.4" fill="#1f1f21" stroke="#f6a62e" stroke-width="1.3"/><circle cx="1333.51" cy="331.9" r="2.4" fill="#1f1f21" stroke="#f6a62e" stroke-width="1.3"/><circle cx="1346.61" cy="331.9" r="2.4" fill="#1f1f21" stroke="#f6a62e" stroke-width="1.3"/><circle cx="1359.7" cy="338.3" r="2.4" fill="#1f1f21" stroke="#f6a62e" stroke-width="1.3"/><circle cx="1372.8" cy="345" r="2.4" fill="#1f1f21" stroke="#f6a62e" stroke-width="1.3"/><circle cx="1385.9" cy="351.5" r="2.4" fill="#1f1f21" stroke="#f6a62e" stroke-width="1.3"/><circle cx="940.6" cy="219.8" r="2.4" fill="#1f1f21" stroke="#ec7cbd" stroke-width="1.3"/><circle cx="953.7" cy="232" r="2.4" fill="#1f1f21" stroke="#ec7cbd" stroke-width="1.3"/><circle cx="966.79" cy="232" r="2.4" fill="#1f1f21" stroke="#ec7cbd" stroke-width="1.3"/><circle cx="979.89" cy="232" r="2.4" fill="#1f1f21" stroke="#ec7cbd" stroke-width="1.3"/><circle cx="992.99" cy="244.8" r="2.4" fill="#1f1f21" stroke="#ec7cbd" stroke-width="1.3"/><circle cx="1006.09" cy="257.1" r="2.4" fill="#1f1f21" stroke="#ec7cbd" stroke-width="1.3"/><circle cx="1019.18" cy="269" r="2.4" fill="#1f1f21" stroke="#ec7cbd" stroke-width="1.3"/><circle cx="1032.28" cy="281.5" r="2.4" fill="#1f1f21" stroke="#ec7cbd" stroke-width="1.3"/><circle cx="1045.38" cy="293.8" r="2.4" fill="#1f1f21" stroke="#ec7cbd" stroke-width="1.3"/><circle cx="1058.47" cy="293.8" r="2.4" fill="#1f1f21" stroke="#ec7cbd" stroke-width="1.3"/><circle cx="1071.57" cy="293.8" r="2.4" fill="#1f1f21" stroke="#ec7cbd" stroke-width="1.3"/><circle cx="1084.67" cy="306" r="2.4" fill="#1f1f21" stroke="#ec7cbd" stroke-width="1.3"/><circle cx="1097.76" cy="318.2" r="2.4" fill="#1f1f21" stroke="#ec7cbd" stroke-width="1.3"/><circle cx="1110.86" cy="330.7" r="2.4" fill="#1f1f21" stroke="#ec7cbd" stroke-width="1.3"/><circle cx="1123.96" cy="343" r="2.4" fill="#1f1f21" stroke="#ec7cbd" stroke-width="1.3"/><circle cx="1137.06" cy="354.9" r="2.4" fill="#1f1f21" stroke="#ec7cbd" stroke-width="1.3"/><circle cx="1150.15" cy="367" r="2.4" fill="#1f1f21" stroke="#ec7cbd" stroke-width="1.3"/><circle cx="940.6" cy="354.9" r="2.4" fill="#1f1f21" stroke="#2dbd5f" stroke-width="1.3"/><circle cx="953.7" cy="354.9" r="2.4" fill="#1f1f21" stroke="#2dbd5f" stroke-width="1.3"/><circle cx="966.79" cy="354.9" r="2.4" fill="#1f1f21" stroke="#2dbd5f" stroke-width="1.3"/><circle cx="979.89" cy="354.9" r="2.4" fill="#1f1f21" stroke="#2dbd5f" stroke-width="1.3"/><circle cx="992.99" cy="350.3" r="2.4" fill="#1f1f21" stroke="#2dbd5f" stroke-width="1.3"/><circle cx="1006.09" cy="348.8" r="2.4" fill="#1f1f21" stroke="#2dbd5f" stroke-width="1.3"/><circle cx="1019.18" cy="333.8" r="2.4" fill="#1f1f21" stroke="#2dbd5f" stroke-width="1.3"/><circle cx="1032.28" cy="330.7" r="2.4" fill="#1f1f21" stroke="#2dbd5f" stroke-width="1.3"/><circle cx="1045.38" cy="321" r="2.4" fill="#1f1f21" stroke="#2dbd5f" stroke-width="1.3"/><circle cx="1058.47" cy="317.6" r="2.4" fill="#1f1f21" stroke="#2dbd5f" stroke-width="1.3"/><circle cx="1071.57" cy="317.6" r="2.4" fill="#1f1f21" stroke="#2dbd5f" stroke-width="1.3"/><circle cx="1084.67" cy="308.4" r="2.4" fill="#1f1f21" stroke="#2dbd5f" stroke-width="1.3"/><circle cx="1097.76" cy="297.7" r="2.4" fill="#1f1f21" stroke="#2dbd5f" stroke-width="1.3"/><circle cx="1110.86" cy="295.3" r="2.4" fill="#1f1f21" stroke="#2dbd5f" stroke-width="1.3"/><circle cx="940.6" cy="219.8" r="2.4" fill="#1f1f21" stroke="#8aa1b0" stroke-width="1.3"/><circle cx="953.7" cy="219.8" r="2.4" fill="#1f1f21" stroke="#8aa1b0" stroke-width="1.3"/><circle cx="966.79" cy="219.8" r="2.4" fill="#1f1f21" stroke="#8aa1b0" stroke-width="1.3"/><circle cx="979.89" cy="219.8" r="2.4" fill="#1f1f21" stroke="#8aa1b0" stroke-width="1.3"/><circle cx="992.99" cy="222.2" r="2.4" fill="#1f1f21" stroke="#8aa1b0" stroke-width="1.3"/><circle cx="1006.09" cy="214.3" r="2.4" fill="#1f1f21" stroke="#8aa1b0" stroke-width="1.3"/><circle cx="1019.18" cy="214.3" r="2.4" fill="#1f1f21" stroke="#8aa1b0" stroke-width="1.3"/><circle cx="1032.28" cy="205.4" r="2.4" fill="#1f1f21" stroke="#8aa1b0" stroke-width="1.3"/><circle cx="1045.38" cy="198.4" r="2.4" fill="#1f1f21" stroke="#8aa1b0" stroke-width="1.3"/><circle cx="1058.47" cy="198.4" r="2.4" fill="#1f1f21" stroke="#8aa1b0" stroke-width="1.3"/><circle cx="1071.57" cy="198.4" r="2.4" fill="#1f1f21" stroke="#8aa1b0" stroke-width="1.3"/><circle cx="1084.67" cy="197.1" r="2.4" fill="#1f1f21" stroke="#8aa1b0" stroke-width="1.3"/><circle cx="1097.76" cy="196.5" r="2.4" fill="#1f1f21" stroke="#8aa1b0" stroke-width="1.3"/><circle cx="1110.86" cy="197.8" r="2.4" fill="#1f1f21" stroke="#8aa1b0" stroke-width="1.3"/><circle cx="992.99" cy="226.5" r="2.4" fill="#1f1f21" stroke="#7659f5" stroke-width="1.3"/><circle cx="1006.09" cy="221.3" r="2.4" fill="#1f1f21" stroke="#7659f5" stroke-width="1.3"/><circle cx="1019.18" cy="236" r="2.4" fill="#1f1f21" stroke="#7659f5" stroke-width="1.3"/><circle cx="1032.28" cy="229.9" r="2.4" fill="#1f1f21" stroke="#7659f5" stroke-width="1.3"/><circle cx="1045.38" cy="232.6" r="2.4" fill="#1f1f21" stroke="#7659f5" stroke-width="1.3"/><circle cx="1058.47" cy="236" r="2.4" fill="#1f1f21" stroke="#7659f5" stroke-width="1.3"/><circle cx="1071.57" cy="236" r="2.4" fill="#1f1f21" stroke="#7659f5" stroke-width="1.3"/><circle cx="1084.67" cy="244.5" r="2.4" fill="#1f1f21" stroke="#7659f5" stroke-width="1.3"/><circle cx="1097.76" cy="249.1" r="2.4" fill="#1f1f21" stroke="#7659f5" stroke-width="1.3"/><circle cx="1110.86" cy="252.8" r="2.4" fill="#1f1f21" stroke="#7659f5" stroke-width="1.3"/></g></g></svg><svg class="chart" width="1840" height="900"><defs><clipPath id="cfc"><rect x="16" y="454" width="450" height="390"/></clipPath></defs><g clip-path="url(#cfc)"><rect x="26.8" y="464" width="460" height="34.4" rx="3" fill="#2c2d30"/><polyline points="39.8,479.3 44.3,484.3 48.8,479.3" fill="none" stroke="#c8c8cb" stroke-width="1.4"/><text x="62.4" y="486.6" font-size="15.8" fill="#e6e6e8">Forecast</text><text x="44.9" y="529.3" font-size="12" fill="#b6b6b9" font-weight="bold">Label</text><text x="178" y="529.3" font-size="12" fill="#b6b6b9" font-weight="bold">Type</text><text x="381" y="529.3" font-size="12.3" fill="#b6b6b9" font-weight="bold">Velocity</text><rect x="44.9" y="540" width="430" height="2" fill="#38383b"/><rect x="44.4" y="551.9" width="15.3" height="15.8" rx="3" fill="#f6a62e"/><text x="68.7" y="564.5" font-size="13.9" fill="#c2c2c5">Average</text><text x="178" y="564.5" font-size="14.4" fill="#c2c2c5">Auto</text><text x="381" y="564.5" font-size="14.4" fill="#c2c2c5">25.42</text><rect x="44.9" y="576" width="430" height="1" fill="#323235"/><rect x="44.4" y="587.05" width="15.3" height="15.8" rx="3" fill="#ec7cbd"/><text x="68.7" y="599.4" font-size="13.9" fill="#c2c2c5">Median, 50%</text><text x="178" y="599.4" font-size="14.4" fill="#c2c2c5">What-if percentile, 50%*</text><circle cx="346.5" cy="594.4" r="6" fill="none" stroke="#c4c4c7" stroke-width="1.1"/><line x1="346.5" y1="593.8" x2="346.5" y2="597.7" stroke="#c4c4c7" stroke-width="1.32"/><circle cx="346.5" cy="591.7" r="0.84" fill="#c4c4c7"/><text x="381" y="599.4" font-size="14.4" fill="#c2c2c5">26.38</text><rect x="44.9" y="610.75" width="430" height="1" fill="#323235"/><rect x="44.4" y="622.2" width="15.3" height="15.8" rx="3" fill="#7659f5"/><text x="68.7" y="634.3" font-size="13.9" fill="#c2c2c5">85%</text><text x="178" y="634.3" font-size="14.4" fill="#c2c2c5">What-if percentile, 85%*</text><circle cx="346.5" cy="629.3" r="6" fill="none" stroke="#c4c4c7" stroke-width="1.1"/><line x1="346.5" y1="628.7" x2="346.5" y2="632.6" stroke="#c4c4c7" stroke-width="1.32"/><circle cx="346.5" cy="626.6" r="0.84" fill="#c4c4c7"/><text x="381" y="634.3" font-size="14.4" fill="#c2c2c5">34.9</text><rect x="44.9" y="645.5" width="430" height="1" fill="#323235"/><text x="44.9" y="667.2" font-size="14" fill="#c2c2c5">* - manually entered value for what-if scenario</text><text x="118.7" y="716.8" font-size="12.3" fill="#b6b6b9" font-weight="bold">Velocity</text><text x="204.7" y="716.8" font-size="12.5" fill="#b6b6b9" font-weight="bold">Complete date</text><text x="317.6" y="716.8" font-size="12.5" fill="#b6b6b9" font-weight="bold">Sprints</text><rect x="108.9" y="727.7" width="263.1" height="2" fill="#38383b"/><text x="118.7" y="752.3" font-size="14.4" fill="#c2c2c5">25.42</text><text x="204.7" y="752.3" font-size="14.5" fill="#c2c2c5">23/10/2026</text><text x="317.6" y="752.3" font-size="14.4" fill="#c2c2c5">16</text><rect x="108.9" y="764" width="263.1" height="1" fill="#323235"/><text x="118.7" y="787.15" font-size="14.4" fill="#c2c2c5">26.38</text><text x="204.7" y="787.15" font-size="14.5" fill="#c2c2c5">23/10/2026</text><text x="317.6" y="787.15" font-size="14.4" fill="#c2c2c5">16</text><rect x="108.9" y="798.6" width="263.1" height="1" fill="#323235"/><text x="118.7" y="822" font-size="14.4" fill="#c2c2c5">34.9</text><text x="204.7" y="822" font-size="14.5" fill="#c2c2c5">28/08/2026</text><text x="317.6" y="822" font-size="14.4" fill="#c2c2c5">12</text></g></svg><svg class="chart" width="1840" height="900"><defs><clipPath id="cbk"><rect x="474" y="454" width="450" height="390"/></clipPath></defs><g clip-path="url(#cbk)"><rect x="483.2" y="464.1" width="434.6" height="20.3" rx="3" fill="#2c2d30"/><polyline points="491.25,472.8 494,475.8 496.75,472.8" fill="none" stroke="#c4c4c7" stroke-width="1.1"/><text x="504.4" y="477.6" font-size="9.6" fill="#e2e2e4">Breakdown</text><rect x="563.1" y="468.2" width="67.7" height="12" rx="2" fill="#38393c"/><text x="570.5" y="477.1" font-size="7.7" fill="#d2d2d5">Breakdown</text><polyline points="615.6,471.7 618.4,474.2 615.6,476.7" fill="none" stroke="#c8c8cb" stroke-width="1"/><rect x="796.4" y="468.8" width="58.3" height="11.4" rx="2" fill="#38393c"/><text x="801.5" y="477.1" font-size="7.6" fill="#d2d2d5">Collapse all</text><path d="M847.3,471.5 L849.4,473.8 L851.5,471.5 M847.3,477.5 L849.4,475.2 L851.5,477.5" fill="none" stroke="#d2d2d5" stroke-width="0.9"/><rect x="858.2" y="468.8" width="54.1" height="11.4" rx="2" fill="#38393c"/><text x="863.3" y="477.1" font-size="7.6" fill="#d2d2d5">Expand all</text><path d="M905.5,472.8 L907.6,470.7 L909.7,472.8 M905.5,476.2 L907.6,478.3 L909.7,476.2" fill="none" stroke="#d2d2d5" stroke-width="0.9"/><text x="493.9" y="502.9" font-size="7.7" fill="#c4c4c7" font-weight="bold">Metrics</text><text x="709" y="502.9" font-size="7.7" fill="#c4c4c7" font-weight="bold">Total</text><circle cx="733.6" cy="500.1" r="3.3" fill="none" stroke="#c4c4c7" stroke-width="0.8"/><line x1="733.6" y1="499.77" x2="733.6" y2="501.92" stroke="#c4c4c7" stroke-width="0.96"/><circle cx="733.6" cy="498.62" r="0.46" fill="#c4c4c7"/><text x="825.2" y="502.9" font-size="7.7" fill="#c4c4c7" font-weight="bold">Trend</text><circle cx="852.5" cy="500.1" r="3.3" fill="none" stroke="#c4c4c7" stroke-width="0.8"/><line x1="852.5" y1="499.77" x2="852.5" y2="501.92" stroke="#c4c4c7" stroke-width="0.96"/><circle cx="852.5" cy="498.62" r="0.46" fill="#c4c4c7"/><rect x="493.9" y="509" width="440" height="2" fill="#343437"/><rect x="493.9" y="511" width="440" height="23.7" fill="#1e3251"/><polyline points="499.35,521 502.1,524 504.85,521" fill="none" stroke="#c4c4c7" stroke-width="1.1"/><rect x="512.2" y="518.2" width="9.4" height="9" rx="2" fill="#7659f5"/><text x="527" y="526" font-size="9.4" fill="#d6d6d9">Remaining Work</text><text x="709" y="526" font-size="9.6" fill="#d6d6d9">403.25</text><text x="825" y="526" font-size="9.6" fill="#d6d6d9">-</text><rect x="524.7" y="537.4" width="420" height="15.5" rx="3" fill="#2a2b2e"/><polyline points="515.4,543.8 518,546.6 520.6,543.8" fill="none" stroke="#c4c4c7" stroke-width="1.1"/><g transform="translate(529.3,540.2) scale(0.86)"><path d="M6.5,0.5 L1,6.2 L4.6,6.2 L3.5,10.5 L9,4.8 L5.4,4.8 Z" fill="none" stroke="#c36cf0" stroke-width="1.4" stroke-linejoin="round"/></g><text x="539.9" y="548.4" font-size="9.3" fill="#d0d0d3">Parent Epic 1</text><rect x="643.2" y="543.2" width="49.8" height="4" rx="2" fill="#3b3552"/><rect x="643.2" y="543.2" width="29.88" height="4" rx="2" fill="#7659f5"/><text x="709" y="548.4" font-size="9.3" fill="#d0d0d3">241 (60%)</text><text x="825" y="548.4" font-size="9.3" fill="#d0d0d3">-</text><g transform="translate(547.8,559.5)" fill="none" stroke="#e8584a" stroke-width="1"><ellipse cx="4.8" cy="5.2" rx="2.6" ry="3.2"/><line x1="4.8" y1="2.5" x2="4.8" y2="8.2"/><path d="M2.2,3.6 L0.5,2.4 M7.4,3.6 L9.1,2.4 M2.2,5.4 H0.3 M7.4,5.4 H9.3 M2.3,7.2 L0.6,8.6 M7.3,7.2 L9,8.6 M3.5,2 L2.8,0.6 M6.1,2 L6.8,0.6"/></g><text x="560.7" y="567.5" font-size="8.2" fill="#cfcfd2">Bug</text><rect x="643.2" y="562.6" width="3" height="4" rx="1.5" fill="#7659f5"/><rect x="647.83" y="562.6" width="3" height="4" rx="1.5" fill="#34304a"/><rect x="652.46" y="562.6" width="3" height="4" rx="1.5" fill="#34304a"/><rect x="657.09" y="562.6" width="3" height="4" rx="1.5" fill="#34304a"/><rect x="661.72" y="562.6" width="3" height="4" rx="1.5" fill="#34304a"/><rect x="666.35" y="562.6" width="3" height="4" rx="1.5" fill="#34304a"/><rect x="670.98" y="562.6" width="3" height="4" rx="1.5" fill="#34304a"/><rect x="675.61" y="562.6" width="3" height="4" rx="1.5" fill="#34304a"/><rect x="680.24" y="562.6" width="3" height="4" rx="1.5" fill="#34304a"/><rect x="684.87" y="562.6" width="3" height="4" rx="1.5" fill="#34304a"/><text x="709" y="567.5" font-size="8.1" fill="#cfcfd2">21.75 (9%)</text><text x="825" y="567.5" font-size="8.1" fill="#cfcfd2">-</text><g transform="translate(548.5,577.5) scale(0.84)"><path d="M6.5,0.5 L1,6.2 L4.6,6.2 L3.5,10.5 L9,4.8 L5.4,4.8 Z" fill="none" stroke="#c36cf0" stroke-width="1.4" stroke-linejoin="round"/></g><text x="560.7" y="585.4" font-size="8.2" fill="#cfcfd2">Epic</text><rect x="643.2" y="580.5" width="3" height="4" rx="1.5" fill="#7659f5"/><rect x="647.83" y="580.5" width="3" height="4" rx="1.5" fill="#7659f5"/><rect x="652.46" y="580.5" width="3" height="4" rx="1.5" fill="#7659f5"/><rect x="657.09" y="580.5" width="3" height="4" rx="1.5" fill="#7659f5"/><rect x="661.72" y="580.5" width="3" height="4" rx="1.5" fill="#7659f5"/><rect x="666.35" y="580.5" width="3" height="4" rx="1.5" fill="#7659f5"/><rect x="670.98" y="580.5" width="3" height="4" rx="1.5" fill="#7659f5"/><rect x="675.61" y="580.5" width="3" height="4" rx="1.5" fill="#7659f5"/><rect x="680.24" y="580.5" width="3" height="4" rx="1.5" fill="#7659f5"/><rect x="684.87" y="580.5" width="3" height="4" rx="1.5" fill="#34304a"/><text x="709" y="585.4" font-size="8.1" fill="#cfcfd2">208.5 (87%)</text><text x="825" y="585.4" font-size="8.1" fill="#cfcfd2">-</text><g transform="translate(547.8,595.6)"><circle cx="4.8" cy="4.8" r="4.2" fill="none" stroke="#e5861d" stroke-width="1.1"/><path d="M3.4,3.8 C3.4,2.2 6.2,2.2 6.2,3.8 C6.2,5 4.8,5 4.8,6" fill="none" stroke="#e5861d" stroke-width="1"/><circle cx="4.8" cy="7.3" r="0.5" fill="#e5861d"/></g><text x="560.7" y="603.8" font-size="8.2" fill="#cfcfd2">Spike</text><rect x="643.2" y="598.9" width="3" height="4" rx="1.5" fill="#34304a"/><rect x="647.83" y="598.9" width="3" height="4" rx="1.5" fill="#34304a"/><rect x="652.46" y="598.9" width="3" height="4" rx="1.5" fill="#34304a"/><rect x="657.09" y="598.9" width="3" height="4" rx="1.5" fill="#34304a"/><rect x="661.72" y="598.9" width="3" height="4" rx="1.5" fill="#34304a"/><rect x="666.35" y="598.9" width="3" height="4" rx="1.5" fill="#34304a"/><rect x="670.98" y="598.9" width="3" height="4" rx="1.5" fill="#34304a"/><rect x="675.61" y="598.9" width="3" height="4" rx="1.5" fill="#34304a"/><rect x="680.24" y="598.9" width="3" height="4" rx="1.5" fill="#34304a"/><rect x="684.87" y="598.9" width="3" height="4" rx="1.5" fill="#34304a"/><text x="709" y="603.8" font-size="8.1" fill="#cfcfd2">0</text><text x="825" y="603.8" font-size="8.1" fill="#cfcfd2">-</text><g transform="translate(549.3,613.8) scale(1)"><path d="M1,0.6 H7 V8.8 L4,6.4 L1,8.8 Z" fill="none" stroke="#6fb23a" stroke-width="1.3" stroke-linejoin="round"/></g><text x="560.7" y="622.2" font-size="8.2" fill="#cfcfd2">Story</text><rect x="643.2" y="617.3" width="3" height="4" rx="1.5" fill="#7659f5"/><rect x="647.83" y="617.3" width="3" height="4" rx="1.5" fill="#34304a"/><rect x="652.46" y="617.3" width="3" height="4" rx="1.5" fill="#34304a"/><rect x="657.09" y="617.3" width="3" height="4" rx="1.5" fill="#34304a"/><rect x="661.72" y="617.3" width="3" height="4" rx="1.5" fill="#34304a"/><rect x="666.35" y="617.3" width="3" height="4" rx="1.5" fill="#34304a"/><rect x="670.98" y="617.3" width="3" height="4" rx="1.5" fill="#34304a"/><rect x="675.61" y="617.3" width="3" height="4" rx="1.5" fill="#34304a"/><rect x="680.24" y="617.3" width="3" height="4" rx="1.5" fill="#34304a"/><rect x="684.87" y="617.3" width="3" height="4" rx="1.5" fill="#34304a"/><text x="709" y="622.2" font-size="8.1" fill="#cfcfd2">7 (3%)</text><text x="825" y="622.2" font-size="8.1" fill="#cfcfd2">-</text><g transform="translate(548.7,632.3) scale(1)"><rect x="0.6" y="0.6" width="7.8" height="7.8" rx="1" fill="none" stroke="#4c8feb" stroke-width="1.1"/><polyline points="2.4,4.6 3.9,6.1 6.7,2.9" fill="none" stroke="#4c8feb" stroke-width="1.1"/></g><text x="560.7" y="640.3" font-size="8.2" fill="#cfcfd2">Task</text><rect x="643.2" y="635.4" width="3" height="4" rx="1.5" fill="#7659f5"/><rect x="647.83" y="635.4" width="3" height="4" rx="1.5" fill="#34304a"/><rect x="652.46" y="635.4" width="3" height="4" rx="1.5" fill="#34304a"/><rect x="657.09" y="635.4" width="3" height="4" rx="1.5" fill="#34304a"/><rect x="661.72" y="635.4" width="3" height="4" rx="1.5" fill="#34304a"/><rect x="666.35" y="635.4" width="3" height="4" rx="1.5" fill="#34304a"/><rect x="670.98" y="635.4" width="3" height="4" rx="1.5" fill="#34304a"/><rect x="675.61" y="635.4" width="3" height="4" rx="1.5" fill="#34304a"/><rect x="680.24" y="635.4" width="3" height="4" rx="1.5" fill="#34304a"/><rect x="684.87" y="635.4" width="3" height="4" rx="1.5" fill="#34304a"/><text x="709" y="640.3" font-size="8.1" fill="#cfcfd2">3.75 (2%)</text><text x="825" y="640.3" font-size="8.1" fill="#cfcfd2">-</text><rect x="524.7" y="649.6" width="420" height="15.5" rx="3" fill="#2a2b2e"/><polyline points="515.4,656 518,658.8 520.6,656" fill="none" stroke="#c4c4c7" stroke-width="1.1"/><g transform="translate(529.3,652.4) scale(0.86)"><path d="M6.5,0.5 L1,6.2 L4.6,6.2 L3.5,10.5 L9,4.8 L5.4,4.8 Z" fill="none" stroke="#c36cf0" stroke-width="1.4" stroke-linejoin="round"/></g><text x="539.9" y="660.6" font-size="9.3" fill="#d0d0d3">Parent Epic 2</text><rect x="643.2" y="655.4" width="49.8" height="4" rx="2" fill="#3b3552"/><rect x="643.2" y="655.4" width="2.49" height="4" rx="2" fill="#7659f5"/><text x="709" y="660.6" font-size="9.3" fill="#d0d0d3">21 (5%)</text><text x="825" y="660.6" font-size="9.3" fill="#d0d0d3">-</text><g transform="translate(549.3,671.3) scale(1)"><path d="M1,0.6 H7 V8.8 L4,6.4 L1,8.8 Z" fill="none" stroke="#6fb23a" stroke-width="1.3" stroke-linejoin="round"/></g><text x="560.7" y="679.7" font-size="8.2" fill="#cfcfd2">Story</text><rect x="643.2" y="674.8" width="3" height="4" rx="1.5" fill="#7659f5"/><rect x="647.83" y="674.8" width="3" height="4" rx="1.5" fill="#7659f5"/><rect x="652.46" y="674.8" width="3" height="4" rx="1.5" fill="#7659f5"/><rect x="657.09" y="674.8" width="3" height="4" rx="1.5" fill="#7659f5"/><rect x="661.72" y="674.8" width="3" height="4" rx="1.5" fill="#7659f5"/><rect x="666.35" y="674.8" width="3" height="4" rx="1.5" fill="#7659f5"/><rect x="670.98" y="674.8" width="3" height="4" rx="1.5" fill="#7659f5"/><rect x="675.61" y="674.8" width="3" height="4" rx="1.5" fill="#7659f5"/><rect x="680.24" y="674.8" width="3" height="4" rx="1.5" fill="#7659f5"/><rect x="684.87" y="674.8" width="3" height="4" rx="1.5" fill="#7659f5"/><text x="709" y="679.7" font-size="8.1" fill="#cfcfd2">21 (100%)</text><text x="825" y="679.7" font-size="8.1" fill="#cfcfd2">-</text><rect x="524.7" y="688.8" width="420" height="15.5" rx="3" fill="#2a2b2e"/><polyline points="516.6,694 519.4,696.6 516.6,699.2" fill="none" stroke="#c4c4c7" stroke-width="1.1"/><g transform="translate(529.3,691.6) scale(0.86)"><path d="M6.5,0.5 L1,6.2 L4.6,6.2 L3.5,10.5 L9,4.8 L5.4,4.8 Z" fill="none" stroke="#c36cf0" stroke-width="1.4" stroke-linejoin="round"/></g><text x="539.9" y="699.8" font-size="9.3" fill="#d0d0d3">Parent Epic 3</text><rect x="643.2" y="694.6" width="49.8" height="4" rx="2" fill="#3b3552"/><rect x="643.2" y="694.6" width="1.6" height="4" rx="2" fill="#7659f5"/><text x="709" y="699.8" font-size="9.3" fill="#d0d0d3">6 (1%)</text><text x="825" y="699.8" font-size="9.3" fill="#d0d0d3">-</text><rect x="524.7" y="709.7" width="420" height="15.5" rx="3" fill="#2a2b2e"/><polyline points="516.6,714.9 519.4,717.5 516.6,720.1" fill="none" stroke="#c4c4c7" stroke-width="1.1"/><g transform="translate(529.3,712.5) scale(0.86)"><path d="M6.5,0.5 L1,6.2 L4.6,6.2 L3.5,10.5 L9,4.8 L5.4,4.8 Z" fill="none" stroke="#c36cf0" stroke-width="1.4" stroke-linejoin="round"/></g><text x="539.9" y="720.7" font-size="9.3" fill="#d0d0d3">Parent Epic 4</text><rect x="643.2" y="715.5" width="49.8" height="4" rx="2" fill="#3b3552"/><rect x="643.2" y="715.5" width="1.6" height="4" rx="2" fill="#7659f5"/><text x="709" y="720.7" font-size="9.3" fill="#d0d0d3">0</text><text x="825" y="720.7" font-size="9.3" fill="#d0d0d3">-</text><rect x="524.7" y="730.5" width="420" height="15.5" rx="3" fill="#2a2b2e"/><polyline points="516.6,735.7 519.4,738.3 516.6,740.9" fill="none" stroke="#c4c4c7" stroke-width="1.1"/><g transform="translate(529.3,733.3) scale(0.86)"><path d="M6.5,0.5 L1,6.2 L4.6,6.2 L3.5,10.5 L9,4.8 L5.4,4.8 Z" fill="none" stroke="#c36cf0" stroke-width="1.4" stroke-linejoin="round"/></g><text x="539.9" y="741.5" font-size="9.3" fill="#d0d0d3">Parent Epic 5</text><rect x="643.2" y="736.3" width="49.8" height="4" rx="2" fill="#3b3552"/><rect x="643.2" y="736.3" width="1.6" height="4" rx="2" fill="#7659f5"/><text x="709" y="741.5" font-size="9.3" fill="#d0d0d3">0</text><text x="825" y="741.5" font-size="9.3" fill="#d0d0d3">-</text><rect x="524.7" y="751.3" width="420" height="15.5" rx="3" fill="#2a2b2e"/><polyline points="516.6,756.5 519.4,759.1 516.6,761.7" fill="none" stroke="#c4c4c7" stroke-width="1.1"/><g transform="translate(529.3,754.1) scale(0.86)"><path d="M6.5,0.5 L1,6.2 L4.6,6.2 L3.5,10.5 L9,4.8 L5.4,4.8 Z" fill="none" stroke="#c36cf0" stroke-width="1.4" stroke-linejoin="round"/></g><text x="539.9" y="762.3" font-size="9.3" fill="#d0d0d3">Parent Epic 6</text><rect x="643.2" y="757.1" width="49.8" height="4" rx="2" fill="#3b3552"/><rect x="643.2" y="757.1" width="1.6" height="4" rx="2" fill="#7659f5"/><text x="709" y="762.3" font-size="9.3" fill="#d0d0d3">3.5 (1%)</text><text x="825" y="762.3" font-size="9.3" fill="#d0d0d3">-</text><rect x="524.7" y="771.6" width="420" height="15.5" rx="3" fill="#2a2b2e"/><polyline points="516.6,776.8 519.4,779.4 516.6,782" fill="none" stroke="#c4c4c7" stroke-width="1.1"/><g transform="translate(529.3,774.4) scale(0.86)"><path d="M6.5,0.5 L1,6.2 L4.6,6.2 L3.5,10.5 L9,4.8 L5.4,4.8 Z" fill="none" stroke="#c36cf0" stroke-width="1.4" stroke-linejoin="round"/></g><text x="539.9" y="782.6" font-size="9.3" fill="#d0d0d3">Parent Epic 7</text><rect x="643.2" y="777.4" width="49.8" height="4" rx="2" fill="#3b3552"/><rect x="643.2" y="777.4" width="1.6" height="4" rx="2" fill="#7659f5"/><text x="709" y="782.6" font-size="9.3" fill="#d0d0d3">5.5 (1%)</text><text x="825" y="782.6" font-size="9.3" fill="#d0d0d3">-</text><rect x="524.7" y="792.1" width="420" height="15.5" rx="3" fill="#2a2b2e"/><polyline points="516.6,797.3 519.4,799.9 516.6,802.5" fill="none" stroke="#c4c4c7" stroke-width="1.1"/><g transform="translate(529.3,794.9) scale(0.86)"><path d="M6.5,0.5 L1,6.2 L4.6,6.2 L3.5,10.5 L9,4.8 L5.4,4.8 Z" fill="none" stroke="#c36cf0" stroke-width="1.4" stroke-linejoin="round"/></g><text x="539.9" y="803.1" font-size="9.3" fill="#d0d0d3">Parent Epic 8</text><rect x="643.2" y="797.9" width="49.8" height="4" rx="2" fill="#3b3552"/><rect x="643.2" y="797.9" width="1.6" height="4" rx="2" fill="#7659f5"/><text x="709" y="803.1" font-size="9.3" fill="#d0d0d3">2 (0%)</text><text x="825" y="803.1" font-size="9.3" fill="#d0d0d3">-</text><rect x="524.7" y="813.2" width="420" height="15.5" rx="3" fill="#2a2b2e"/><polyline points="516.6,818.4 519.4,821 516.6,823.6" fill="none" stroke="#c4c4c7" stroke-width="1.1"/><g transform="translate(529.3,816) scale(0.86)"><path d="M6.5,0.5 L1,6.2 L4.6,6.2 L3.5,10.5 L9,4.8 L5.4,4.8 Z" fill="none" stroke="#c36cf0" stroke-width="1.4" stroke-linejoin="round"/></g><text x="539.9" y="824.2" font-size="9.3" fill="#d0d0d3">Parent Epic 9</text><rect x="643.2" y="819" width="49.8" height="4" rx="2" fill="#3b3552"/><rect x="643.2" y="819" width="1.6" height="4" rx="2" fill="#7659f5"/><text x="709" y="824.2" font-size="9.3" fill="#d0d0d3">0.5 (0%)</text><text x="825" y="824.2" font-size="9.3" fill="#d0d0d3">-</text><rect x="524.7" y="833.8" width="420" height="15.5" rx="3" fill="#2a2b2e"/><polyline points="516.6,839 519.4,841.6 516.6,844.2" fill="none" stroke="#c4c4c7" stroke-width="1.1"/><g transform="translate(529.3,836.6) scale(0.86)"><path d="M6.5,0.5 L1,6.2 L4.6,6.2 L3.5,10.5 L9,4.8 L5.4,4.8 Z" fill="none" stroke="#c36cf0" stroke-width="1.4" stroke-linejoin="round"/></g><text x="539.9" y="844.8" font-size="9.3" fill="#d0d0d3">Parent Epic 10</text><rect x="643.2" y="839.6" width="49.8" height="4" rx="2" fill="#3b3552"/><rect x="643.2" y="839.6" width="1.6" height="4" rx="2" fill="#7659f5"/><text x="709" y="844.8" font-size="9.3" fill="#d0d0d3">7.75 (2%)</text><text x="825" y="844.8" font-size="9.3" fill="#d0d0d3">-</text></g></svg><svg class="chart" width="1840" height="900"><defs><clipPath id="cis"><rect x="932" y="454" width="450" height="390"/></clipPath></defs><g clip-path="url(#cis)"><rect x="943.1" y="463.2" width="428.4" height="20.7" rx="3" fill="#2c2d30"/><polyline points="951.65,472.1 954.4,475.1 957.15,472.1" fill="none" stroke="#c4c4c7" stroke-width="1.1"/><text x="964.8" y="477" font-size="10.4" fill="#e0e0e3">Issues (28)</text><rect x="1023.7" y="467.8" width="61" height="12" rx="2" fill="#38393c"/><text x="1031.5" y="476.8" font-size="7.8" fill="#d2d2d5">Columns</text><polyline points="1070.1,471.3 1072.9,473.8 1070.1,476.3" fill="none" stroke="#c8c8cb" stroke-width="1"/><text x="954.1" y="509.3" font-size="9.5" fill="#dcdcdf" font-weight="bold">Sprint 1 (Alpha)</text><rect x="1035.2" y="500.4" width="36.4" height="11" rx="2.5" fill="none" stroke="#4f7a2e" stroke-width="0.9"/><text x="1053.4" y="508.7" font-size="6.8" fill="#dcdcdf" font-weight="bold" text-anchor="middle">CLOSED</text><text x="1076.8" y="502.9" font-size="9" fill="#d6d6d9">2024-01-26</text><text x="1076.8" y="514.9" font-size="9" fill="#d6d6d9">2024-02-08</text><rect x="1272.8" y="496" width="98.2" height="20.2" rx="3" fill="none" stroke="#3a3a3d" stroke-width="1"/><text x="1280.8" y="509.3" font-size="9.9" fill="#d6d6d9">View Sprint Report</text><text x="954.1" y="539.2" font-size="9.9" fill="#dcdcdf">Completed Issues</text><rect x="1038.6" y="527.4" width="16" height="16" rx="2.5" fill="none" stroke="#2e2e31" stroke-width="0.8"/><path d="M1048.2,531.2 H1051.3 V534.3 M1051.3,531.2 L1045.6,536.9 M1046.8,532.2 H1042.6 V540.2 H1050.4 V536" fill="none" stroke="#cfcfd2" stroke-width="1.1"/><text x="954.1" y="567.8" font-size="8.5" fill="#c4c4c7" font-weight="bold">T</text><text x="975.7" y="567.8" font-size="8.5" fill="#c4c4c7" font-weight="bold">Key</text><text x="1033.4" y="567.8" font-size="8.5" fill="#c4c4c7" font-weight="bold">Summary</text><text x="1139.6" y="567.8" font-size="8.5" fill="#c4c4c7" font-weight="bold">Story Points (32.5)</text><text x="1241.9" y="567.8" font-size="8.5" fill="#c4c4c7" font-weight="bold">Assignee</text><text x="1321.7" y="567.8" font-size="8.5" fill="#c4c4c7" font-weight="bold">Status</text><path d="M999.5,561.5 V567 M997.3,565 L999.5,567.3 L1001.7,565" fill="none" stroke="#c4c4c7" stroke-width="0.9"/><rect x="954.1" y="574.2" width="417.4" height="2" fill="#333336"/><g transform="translate(955.8,581.8) scale(1)"><path d="M1,0.6 H7 V8.8 L4,6.4 L1,8.8 Z" fill="none" stroke="#6fb23a" stroke-width="1.3" stroke-linejoin="round"/></g><text x="975.7" y="590.1" font-size="9.7" fill="#cfcfd2">ALPHA-7</text><text x="1033.4" y="590.1" font-size="9.8" fill="#cfcfd2">User Story #1</text><rect x="1170.75" y="580.1" width="18.5" height="12.7" rx="2" fill="#2e2f32"/><text x="1180" y="590.1" font-size="9.7" fill="#d6d6d9" text-anchor="middle">13</text><circle cx="1249.5" cy="586.5" r="6.7" fill="#1b2d5c"/><text x="1249.5" y="588.6" font-size="5.6" fill="#c9d6f5" font-weight="bold" text-anchor="middle">JA</text><text x="1260.9" y="590.1" font-size="9.9" fill="#cfcfd2">Joe Alpha</text><rect x="1321.6" y="581" width="44.6" height="11" rx="2" fill="none" stroke="#557a2e" stroke-width="0.9"/><text x="1343.9" y="589" font-size="7.1" fill="#dcdcdf" font-weight="bold" text-anchor="middle">RELEASED</text><rect x="954.1" y="596.1" width="417.4" height="1" fill="#2f2f32"/><g transform="translate(955.8,603.32) scale(1)"><path d="M1,0.6 H7 V8.8 L4,6.4 L1,8.8 Z" fill="none" stroke="#6fb23a" stroke-width="1.3" stroke-linejoin="round"/></g><text x="975.7" y="611.62" font-size="9.7" fill="#cfcfd2">ALPHA-8</text><text x="1033.4" y="611.62" font-size="9.8" fill="#cfcfd2">User Story #2</text><rect x="1173.75" y="601.62" width="12.5" height="12.7" rx="2" fill="#2e2f32"/><text x="1180" y="611.62" font-size="9.7" fill="#d6d6d9" text-anchor="middle">2</text><circle cx="1249.5" cy="608.02" r="6.7" fill="#f4a623"/><text x="1249.5" y="610.12" font-size="5.6" fill="#5a3a05" font-weight="bold" text-anchor="middle">BA</text><text x="1260.9" y="611.62" font-size="9.9" fill="#cfcfd2">Bill Alpha</text><rect x="1321.6" y="602.52" width="44.6" height="11" rx="2" fill="none" stroke="#557a2e" stroke-width="0.9"/><text x="1343.9" y="610.52" font-size="7.1" fill="#dcdcdf" font-weight="bold" text-anchor="middle">RELEASED</text><rect x="954.1" y="617.62" width="417.4" height="1" fill="#2f2f32"/><g transform="translate(955.8,624.84) scale(1)"><path d="M1,0.6 H7 V8.8 L4,6.4 L1,8.8 Z" fill="none" stroke="#6fb23a" stroke-width="1.3" stroke-linejoin="round"/></g><text x="975.7" y="633.14" font-size="9.7" fill="#cfcfd2">ALPHA-9</text><text x="1033.4" y="633.14" font-size="9.8" fill="#cfcfd2">User Story #3</text><rect x="1173.75" y="623.14" width="12.5" height="12.7" rx="2" fill="#2e2f32"/><text x="1180" y="633.14" font-size="9.7" fill="#d6d6d9" text-anchor="middle">1</text><circle cx="1249.5" cy="629.54" r="6.7" fill="#1c8a57"/><text x="1249.5" y="631.64" font-size="5.6" fill="#e4f5ec" font-weight="bold" text-anchor="middle">MA</text><text x="1260.9" y="633.14" font-size="9.9" fill="#cfcfd2">Mary Alpha</text><rect x="1321.6" y="624.04" width="44.6" height="11" rx="2" fill="none" stroke="#557a2e" stroke-width="0.9"/><text x="1343.9" y="632.04" font-size="7.1" fill="#dcdcdf" font-weight="bold" text-anchor="middle">RELEASED</text><rect x="954.1" y="639.14" width="417.4" height="1" fill="#2f2f32"/><g transform="translate(955.2,646.56) scale(1)"><rect x="0.6" y="0.6" width="7.8" height="7.8" rx="1" fill="none" stroke="#4c8feb" stroke-width="1.1"/><polyline points="2.4,4.6 3.9,6.1 6.7,2.9" fill="none" stroke="#4c8feb" stroke-width="1.1"/></g><text x="975.7" y="654.66" font-size="9.7" fill="#cfcfd2">ALPHA-10</text><text x="1033.4" y="654.66" font-size="9.8" fill="#cfcfd2">Tech Task #1-1</text><rect x="1173.75" y="644.66" width="12.5" height="12.7" rx="2" fill="#2e2f32"/><text x="1180" y="654.66" font-size="9.7" fill="#d6d6d9" text-anchor="middle">2</text><circle cx="1249.5" cy="651.06" r="6.7" fill="#1b2d5c"/><text x="1249.5" y="653.16" font-size="5.6" fill="#c9d6f5" font-weight="bold" text-anchor="middle">JA</text><text x="1260.9" y="654.66" font-size="9.9" fill="#cfcfd2">Joe Alpha</text><rect x="1321.6" y="645.56" width="44.6" height="11" rx="2" fill="none" stroke="#557a2e" stroke-width="0.9"/><text x="1343.9" y="653.56" font-size="7.1" fill="#dcdcdf" font-weight="bold" text-anchor="middle">RELEASED</text><rect x="954.1" y="660.66" width="417.4" height="1" fill="#2f2f32"/><g transform="translate(955.2,668.08) scale(1)"><rect x="0.6" y="0.6" width="7.8" height="7.8" rx="1" fill="none" stroke="#4c8feb" stroke-width="1.1"/><polyline points="2.4,4.6 3.9,6.1 6.7,2.9" fill="none" stroke="#4c8feb" stroke-width="1.1"/></g><text x="975.7" y="676.18" font-size="9.7" fill="#cfcfd2">ALPHA-11</text><text x="1033.4" y="676.18" font-size="9.8" fill="#cfcfd2">Tech Task #2-1</text><rect x="1173.75" y="666.18" width="12.5" height="12.7" rx="2" fill="#2e2f32"/><text x="1180" y="676.18" font-size="9.7" fill="#d6d6d9" text-anchor="middle">3</text><circle cx="1249.5" cy="672.58" r="6.7" fill="#f4a623"/><text x="1249.5" y="674.68" font-size="5.6" fill="#5a3a05" font-weight="bold" text-anchor="middle">BA</text><text x="1260.9" y="676.18" font-size="9.9" fill="#cfcfd2">Bill Alpha</text><rect x="1321.6" y="667.08" width="44.6" height="11" rx="2" fill="none" stroke="#557a2e" stroke-width="0.9"/><text x="1343.9" y="675.08" font-size="7.1" fill="#dcdcdf" font-weight="bold" text-anchor="middle">RELEASED</text><rect x="954.1" y="682.18" width="417.4" height="1" fill="#2f2f32"/><g transform="translate(955.2,689.6) scale(1)"><rect x="0.6" y="0.6" width="7.8" height="7.8" rx="1" fill="none" stroke="#4c8feb" stroke-width="1.1"/><polyline points="2.4,4.6 3.9,6.1 6.7,2.9" fill="none" stroke="#4c8feb" stroke-width="1.1"/></g><text x="975.7" y="697.7" font-size="9.7" fill="#cfcfd2">ALPHA-12</text><text x="1033.4" y="697.7" font-size="9.8" fill="#cfcfd2">Tech Task #3-1</text><rect x="1173.75" y="687.7" width="12.5" height="12.7" rx="2" fill="#2e2f32"/><text x="1180" y="697.7" font-size="9.7" fill="#d6d6d9" text-anchor="middle">5</text><circle cx="1249.5" cy="694.1" r="6.7" fill="#1c8a57"/><text x="1249.5" y="696.2" font-size="5.6" fill="#e4f5ec" font-weight="bold" text-anchor="middle">MA</text><text x="1260.9" y="697.7" font-size="9.9" fill="#cfcfd2">Mary Alpha</text><rect x="1321.6" y="688.6" width="44.6" height="11" rx="2" fill="none" stroke="#557a2e" stroke-width="0.9"/><text x="1343.9" y="696.6" font-size="7.1" fill="#dcdcdf" font-weight="bold" text-anchor="middle">RELEASED</text><rect x="954.1" y="703.7" width="417.4" height="1" fill="#2f2f32"/><g transform="translate(955.2,711.12) scale(1)"><rect x="0.6" y="0.6" width="7.8" height="7.8" rx="1" fill="none" stroke="#4c8feb" stroke-width="1.1"/><polyline points="2.4,4.6 3.9,6.1 6.7,2.9" fill="none" stroke="#4c8feb" stroke-width="1.1"/></g><text x="975.7" y="719.22" font-size="9.7" fill="#cfcfd2">ALPHA-13</text><text x="1033.4" y="719.22" font-size="9.8" fill="#cfcfd2">Tech Task #1</text><rect x="1173.75" y="709.22" width="12.5" height="12.7" rx="2" fill="#2e2f32"/><text x="1180" y="719.22" font-size="9.7" fill="#d6d6d9" text-anchor="middle">1</text><circle cx="1249.5" cy="715.62" r="6.7" fill="#1b2d5c"/><text x="1249.5" y="717.72" font-size="5.6" fill="#c9d6f5" font-weight="bold" text-anchor="middle">JA</text><text x="1260.9" y="719.22" font-size="9.9" fill="#cfcfd2">Joe Alpha</text><rect x="1321.6" y="710.12" width="44.6" height="11" rx="2" fill="none" stroke="#557a2e" stroke-width="0.9"/><text x="1343.9" y="718.12" font-size="7.1" fill="#dcdcdf" font-weight="bold" text-anchor="middle">RELEASED</text><rect x="954.1" y="725.22" width="417.4" height="1" fill="#2f2f32"/><g transform="translate(955.2,732.64) scale(1)"><rect x="0.6" y="0.6" width="7.8" height="7.8" rx="1" fill="none" stroke="#4c8feb" stroke-width="1.1"/><polyline points="2.4,4.6 3.9,6.1 6.7,2.9" fill="none" stroke="#4c8feb" stroke-width="1.1"/></g><text x="975.7" y="740.74" font-size="9.7" fill="#cfcfd2">ALPHA-14</text><text x="1033.4" y="740.74" font-size="9.8" fill="#cfcfd2">Tech Task #2</text><rect x="1173.75" y="730.74" width="12.5" height="12.7" rx="2" fill="#2e2f32"/><text x="1180" y="740.74" font-size="9.7" fill="#d6d6d9" text-anchor="middle">1</text><circle cx="1249.5" cy="737.14" r="6.7" fill="#f4a623"/><text x="1249.5" y="739.24" font-size="5.6" fill="#5a3a05" font-weight="bold" text-anchor="middle">BA</text><text x="1260.9" y="740.74" font-size="9.9" fill="#cfcfd2">Bill Alpha</text><rect x="1321.6" y="731.64" width="44.6" height="11" rx="2" fill="none" stroke="#557a2e" stroke-width="0.9"/><text x="1343.9" y="739.64" font-size="7.1" fill="#dcdcdf" font-weight="bold" text-anchor="middle">RELEASED</text><rect x="954.1" y="746.74" width="417.4" height="1" fill="#2f2f32"/><g transform="translate(955.2,754.16) scale(1)"><rect x="0.6" y="0.6" width="7.8" height="7.8" rx="1" fill="none" stroke="#4c8feb" stroke-width="1.1"/><polyline points="2.4,4.6 3.9,6.1 6.7,2.9" fill="none" stroke="#4c8feb" stroke-width="1.1"/></g><text x="975.7" y="762.26" font-size="9.7" fill="#cfcfd2">ALPHA-15</text><text x="1033.4" y="762.26" font-size="9.8" fill="#cfcfd2">Tech Task #3</text><rect x="1173.75" y="752.26" width="12.5" height="12.7" rx="2" fill="#2e2f32"/><text x="1180" y="762.26" font-size="9.7" fill="#d6d6d9" text-anchor="middle">2</text><circle cx="1249.5" cy="758.66" r="6.7" fill="#1c8a57"/><text x="1249.5" y="760.76" font-size="5.6" fill="#e4f5ec" font-weight="bold" text-anchor="middle">MA</text><text x="1260.9" y="762.26" font-size="9.9" fill="#cfcfd2">Mary Alpha</text><rect x="1321.6" y="753.16" width="44.6" height="11" rx="2" fill="none" stroke="#557a2e" stroke-width="0.9"/><text x="1343.9" y="761.16" font-size="7.1" fill="#dcdcdf" font-weight="bold" text-anchor="middle">RELEASED</text><rect x="954.1" y="768.26" width="417.4" height="1" fill="#2f2f32"/><g transform="translate(954.8,775.28)" fill="none" stroke="#e8584a" stroke-width="1"><ellipse cx="4.8" cy="5.2" rx="2.6" ry="3.2"/><line x1="4.8" y1="2.5" x2="4.8" y2="8.2"/><path d="M2.2,3.6 L0.5,2.4 M7.4,3.6 L9.1,2.4 M2.2,5.4 H0.3 M7.4,5.4 H9.3 M2.3,7.2 L0.6,8.6 M7.3,7.2 L9,8.6 M3.5,2 L2.8,0.6 M6.1,2 L6.8,0.6"/></g><text x="975.7" y="783.78" font-size="9.7" fill="#cfcfd2">ALPHA-16</text><text x="1033.4" y="783.78" font-size="9.8" fill="#cfcfd2">Bug #1</text><rect x="1173.75" y="773.78" width="12.5" height="12.7" rx="2" fill="#2e2f32"/><text x="1180" y="783.78" font-size="9.7" fill="#d6d6d9" text-anchor="middle">1</text><text x="1241.9" y="783.78" font-size="9.9" fill="#cfcfd2">Unassigned</text><rect x="1321.6" y="774.68" width="44.6" height="11" rx="2" fill="none" stroke="#557a2e" stroke-width="0.9"/><text x="1343.9" y="782.68" font-size="7.1" fill="#dcdcdf" font-weight="bold" text-anchor="middle">RELEASED</text><rect x="954.1" y="789.78" width="417.4" height="1" fill="#2f2f32"/><g transform="translate(954.8,796.8)" fill="none" stroke="#e8584a" stroke-width="1"><ellipse cx="4.8" cy="5.2" rx="2.6" ry="3.2"/><line x1="4.8" y1="2.5" x2="4.8" y2="8.2"/><path d="M2.2,3.6 L0.5,2.4 M7.4,3.6 L9.1,2.4 M2.2,5.4 H0.3 M7.4,5.4 H9.3 M2.3,7.2 L0.6,8.6 M7.3,7.2 L9,8.6 M3.5,2 L2.8,0.6 M6.1,2 L6.8,0.6"/></g><text x="975.7" y="805.3" font-size="9.7" fill="#cfcfd2">ALPHA-19</text><text x="1033.4" y="805.3" font-size="9.8" fill="#cfcfd2">Bug #4</text><rect x="1170.75" y="795.3" width="18.5" height="12.7" rx="2" fill="#2e2f32"/><text x="1180" y="805.3" font-size="9.7" fill="#d6d6d9" text-anchor="middle">0.5</text><circle cx="1249.5" cy="801.7" r="6.7" fill="#1b2d5c"/><text x="1249.5" y="803.8" font-size="5.6" fill="#c9d6f5" font-weight="bold" text-anchor="middle">JA</text><text x="1260.9" y="805.3" font-size="9.9" fill="#cfcfd2">Joe Alpha</text><rect x="1321.6" y="796.2" width="44.6" height="11" rx="2" fill="none" stroke="#557a2e" stroke-width="0.9"/><text x="1343.9" y="804.2" font-size="7.1" fill="#dcdcdf" font-weight="bold" text-anchor="middle">RELEASED</text><rect x="954.1" y="811.3" width="417.4" height="1" fill="#2f2f32"/><g transform="translate(954.8,818.32)" fill="none" stroke="#e8584a" stroke-width="1"><ellipse cx="4.8" cy="5.2" rx="2.6" ry="3.2"/><line x1="4.8" y1="2.5" x2="4.8" y2="8.2"/><path d="M2.2,3.6 L0.5,2.4 M7.4,3.6 L9.1,2.4 M2.2,5.4 H0.3 M7.4,5.4 H9.3 M2.3,7.2 L0.6,8.6 M7.3,7.2 L9,8.6 M3.5,2 L2.8,0.6 M6.1,2 L6.8,0.6"/></g><text x="975.7" y="826.82" font-size="9.7" fill="#cfcfd2">ALPHA-20</text><text x="1033.4" y="826.82" font-size="9.8" fill="#cfcfd2">Bug #5</text><rect x="1173.75" y="816.82" width="12.5" height="12.7" rx="2" fill="#2e2f32"/><text x="1180" y="826.82" font-size="9.7" fill="#d6d6d9" text-anchor="middle">1</text><circle cx="1249.5" cy="823.22" r="6.7" fill="#f4a623"/><text x="1249.5" y="825.32" font-size="5.6" fill="#5a3a05" font-weight="bold" text-anchor="middle">BA</text><text x="1260.9" y="826.82" font-size="9.9" fill="#cfcfd2">Bill Alpha</text><rect x="1321.6" y="817.72" width="44.6" height="11" rx="2" fill="none" stroke="#557a2e" stroke-width="0.9"/><text x="1343.9" y="825.72" font-size="7.1" fill="#dcdcdf" font-weight="bold" text-anchor="middle">RELEASED</text><rect x="954.1" y="832.82" width="417.4" height="1" fill="#2f2f32"/></g></svg>
<div class="tbar" style="left:18px;top:406px"><span style="transform:scaleX(1.24)">Burnup</span></div>
<div class="tbar" style="left:476px;top:406px"><span style="transform:scaleX(1.24)">Burndown</span></div>
<div class="tbar" style="left:934px;top:406px"><span style="transform:scaleX(1.206)">Sprint burndown</span></div>
<div class="tbar" style="left:18px;top:844px"><span style="transform:scaleX(1.125)">Forecasts</span></div>
<div class="tbar" style="left:476px;top:844px"><span style="transform:scaleX(1.19)">Breakdown</span></div>
<div class="tbar" style="left:934px;top:844px"><span style="transform:scaleX(1.144)">Issue list</span></div>

<div class="hero h1">3 charts</div>
<div class="hero h2">in one</div>
<div class="hero h3">gadget</div>
<div class="compat">Compatible with</div>
<div class="ico" style="left:1429px;background:#1868db">
<svg width="84" height="86" viewBox="0 0 84 86">
<g fill="#fff" id="jp">
<path d="M39.4,18.7 H67.4 V47.3 A10.5,16.9 0 0 1 56.9,30.4 V29.8 H51.6 A12.2,11.1 0 0 1 39.4,18.7 Z"/>
<path transform="translate(-12.6,13.1)" d="M39.4,18.7 H67.4 V47.3 A10.5,16.9 0 0 1 56.9,30.4 V29.8 H51.6 A12.2,11.1 0 0 1 39.4,18.7 Z"/>
<path transform="translate(-25.3,26.2)" d="M39.4,18.7 H67.4 V47.3 A10.5,16.9 0 0 1 56.9,30.4 V29.8 H51.6 A12.2,11.1 0 0 1 39.4,18.7 Z"/>
</g></svg></div>
<div class="ico" style="left:1521px;background:#ffffff">
<svg width="84" height="86" viewBox="0 0 84 86"><g fill="#1868db">
<path d="M27.2,22.7 L39.8,28.2 C42.5,29.4 46,29.6 48.3,28.5 C50,27.6 51.5,25 53.2,22.1 L63.3,29.1 C60,35 56,39.5 52,40.8 C47,43 41,42.5 37.3,40.8 L22,33.7 Z"/>
<path transform="rotate(180 41.8 43.1)" d="M27.2,22.7 L39.8,28.2 C42.5,29.4 46,29.6 48.3,28.5 C50,27.6 51.5,25 53.2,22.1 L63.3,29.1 C60,35 56,39.5 52,40.8 C47,43 41,42.5 37.3,40.8 L22,33.7 Z"/>
</g></svg></div>
<div class="ico" style="left:1613px;background:#fec619">
<svg width="84" height="86" viewBox="0 0 84 86"><g fill="#101214">
<path d="M42.8,14.6 C50,20 54,32 36.4,49 L19.5,48.6 C17,48.5 16.5,46.5 18.3,44.3 Z"/>
<path transform="rotate(180 42.2 43)" d="M42.8,14.6 C50,20 54,32 36.4,49 L19.5,48.6 C17,48.5 16.5,46.5 18.3,44.3 Z"/>
</g></svg></div>
<div class="ico" style="left:1705px;background:#c97ff4">
<svg width="84" height="86" viewBox="0 0 84 86"><g fill="#101214">
<path fill-rule="evenodd" d="M42.3,21.6 A24,24 0 1 0 64.3,44.4 L48.1,44.4 A8.6,8.6 0 1 1 42.3,38 Z"/>
<path d="M45.2,19.3 Q56,21.5 66.8,19.3 Q64.5,30.1 66.8,40.9 Q56,38.7 45.2,40.9 Q47.5,30.1 45.2,19.3 Z"/>
</g></svg></div>

</body></html>
